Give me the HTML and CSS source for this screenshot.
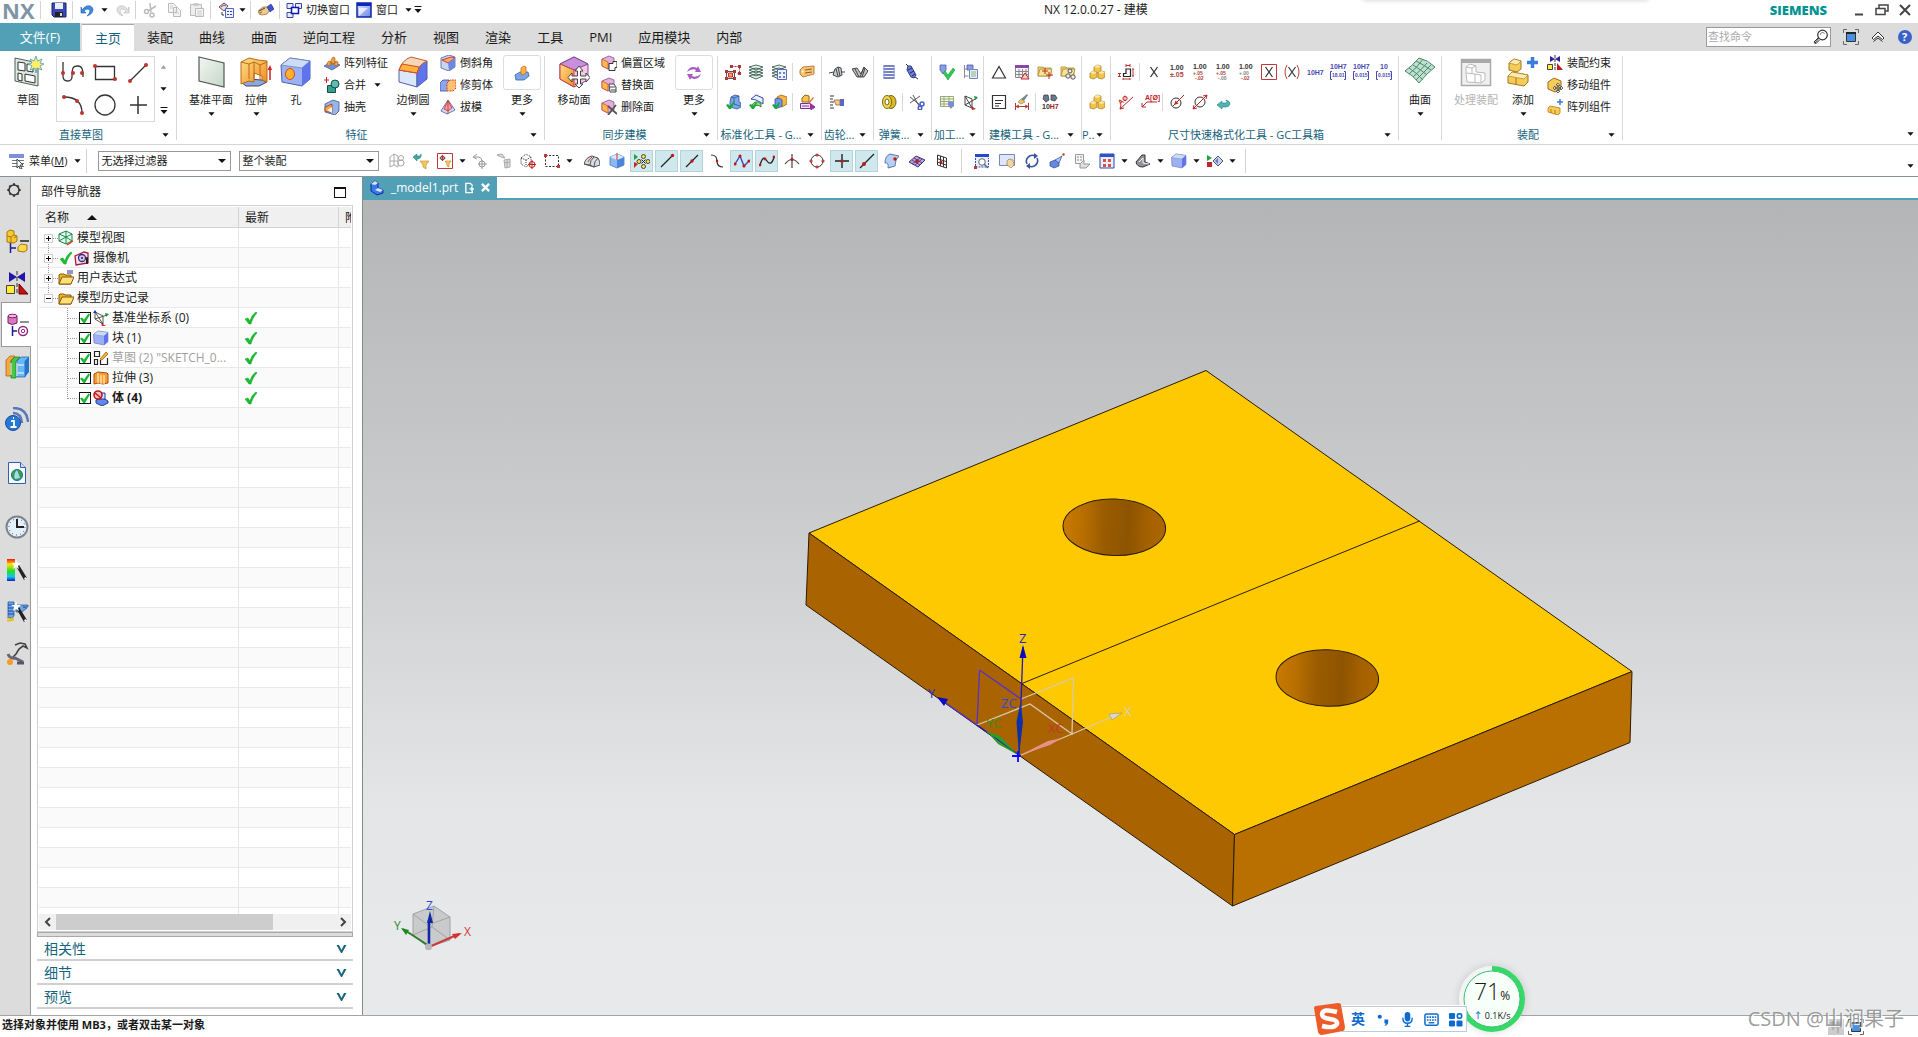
FILE: index.html
```html
<!DOCTYPE html>
<html lang="zh-CN">
<head>
    <meta charset="UTF-8">
    <meta name="viewport" content="width=device-width, initial-scale=1.0">
    <title>NX 12.0.0.27 - 建模</title>
    <link rel="stylesheet" href="styles.css">
</head>
<body>
    <!-- 图标 -->
    <svg class="sprite" aria-hidden="true">
        <defs>
            <linearGradient id="g-blue" x1="0" y1="0" x2="1" y2="1"><stop offset="0" stop-color="#dfe6ff"/><stop offset="1" stop-color="#6a86e8"/></linearGradient>
            <linearGradient id="g-orange" x1="0" y1="0" x2="1" y2="1"><stop offset="0" stop-color="#ffe08a"/><stop offset="1" stop-color="#f08a20"/></linearGradient>
            <linearGradient id="g-green" x1="0" y1="0" x2="1" y2="1"><stop offset="0" stop-color="#f4f6f3"/><stop offset="1" stop-color="#c3d8c6"/></linearGradient>
            <linearGradient id="g-rainbow" x1="0" y1="0" x2="0" y2="1"><stop offset="0" stop-color="#e81e10"/><stop offset=".25" stop-color="#ffe000"/><stop offset=".55" stop-color="#20e020"/><stop offset=".8" stop-color="#10c8e8"/><stop offset="1" stop-color="#1020c8"/></linearGradient>
            <linearGradient id="g-hole" x1="0" y1="0" x2="1" y2="0"><stop offset="0" stop-color="#c97a00"/><stop offset=".2" stop-color="#b86e00"/><stop offset=".4" stop-color="#9a5c00"/><stop offset=".64" stop-color="#8e5400"/><stop offset=".85" stop-color="#a66200"/><stop offset="1" stop-color="#ac6600"/></linearGradient>
        </defs>
        <symbol id="caret" viewBox="0 0 8 4"><path d="M0.500 0h7L4 4z" fill="#111"/></symbol>
        <symbol id="caret-up" viewBox="0 0 8 4"><path d="M1 4h6L4 0z" fill="#999"/></symbol>
        <symbol id="caret-bar" viewBox="0 0 8 8"><path d="M0.500 0h7v1h-7zM0.500 3h7L4 7z" fill="#111"/></symbol>
        <symbol id="check" viewBox="0 0 16 16"><path d="M2 9l3-1 2 3c1-4 3-7 6-9l1 1c-3 3-5 7-6 11H6z" fill="#16c02e" stroke="#0f9a22" stroke-width=".5"/></symbol>

        <symbol id="save" viewBox="0 0 16 16"><path d="M1 1h14v14H3l-2-2z" fill="#3b46b8" stroke="#1c2266"/><path d="M4 1h8v6H4z" fill="#e8f0f4"/><path d="M4 10h8v5H4z" fill="#222"/><path d="M9 11h2v3H9z" fill="#ddd"/></symbol>
        <symbol id="undo" viewBox="0 0 16 16"><path d="M2 8c4-6 10-5 11-1 0 4-3 6-6 7 3-3 4-6 1-7-2 0-3 1-4 2l2 2H1V5z" fill="#3b8be0" stroke="#2058b0" stroke-width=".6"/></symbol>
        <symbol id="redo" viewBox="0 0 16 16"><path d="M14 8C10 2 4 3 3 7c0 4 3 6 6 7-3-3-4-6-1-7 2 0 3 1 4 2l-2 2h5V5z" fill="#e2e2e2" stroke="#bcbcbc" stroke-width=".7"/></symbol>
        <symbol id="cut" viewBox="0 0 16 16"><path d="M7 1l1 9M13 4L5 9" fill="none" stroke="#bbb" stroke-width="1.500"/><circle cx="3.500" cy="9.500" r="2" fill="none" stroke="#bbb" stroke-width="1.500"/><circle cx="9" cy="13" r="2" fill="none" stroke="#bbb" stroke-width="1.500"/></symbol>
        <symbol id="copy" viewBox="0 0 16 16"><path d="M2.500 1.500h5l3 3v6h-8zM7.500 5.500h4l3 3v6h-7z" fill="#f4f4f4" stroke="#bbb"/><path d="M4 4h3M4 6h3M9 9h3M9 11h4" stroke="#ccc"/></symbol>
        <symbol id="paste" viewBox="0 0 16 16"><path d="M1.500 2.500h11v11h-11z" fill="#eee" stroke="#bbb"/><path d="M4.500 1h5v3h-5z" fill="#ccc"/><path d="M6.500 6.500h8v8h-8z" fill="#f6f6f6" stroke="#bbb"/><path d="M8 9h5M8 11h5M8 13h5" stroke="#ccc"/></symbol>
        <symbol id="command" viewBox="0 0 16 16"><path d="M1 5l5-4 4 3-4 5z" fill="#dfe4ea" stroke="#556"/><path d="M3 5l3-2 2 1" stroke="#c33" fill="none"/><path d="M7.500 6.500h8v9h-8z" fill="#eef2ff" stroke="#5566c0"/><path d="M9 9h2v1H9zM12 9h2v1h-2zM9 12h2v1H9zM12 12h2v1h-2z" fill="#3344b0"/><path d="M4 10v3h2" stroke="#333" fill="none"/></symbol>
        <symbol id="hand" viewBox="0 0 16 16"><path d="M0 9l5-4 4 0 3 3-3 4-5 1-3-1 3-2-4 1z" fill="#f2c98c" stroke="#7a5520" stroke-width=".6"/><path d="M9 5l4-3 3 5-4 3z" fill="#4054d0" stroke="#202878" stroke-width=".6"/><path d="M1 9l6-3" stroke="#444"/></symbol>
        <symbol id="switch" viewBox="0 0 16 16"><path d="M1 1.500h6v5H1zM9.500 1.500h6v5h-6zM1 10.500h6v5H1z" fill="#e6ebff" stroke="#3344a0"/><path d="M5.500 5.500h7v6h-7z" fill="#fff" stroke="#0a1ab0" stroke-width="1.500"/></symbol>
        <symbol id="window" viewBox="0 0 16 16"><path d="M1 1h14v14H1z" fill="url(#g-blue)" stroke="#1026a0" stroke-width="1.500"/><path d="M1 1h14v3H1z" fill="#1026c0"/><path d="M3 14V6h9z" fill="#fff" opacity=".7"/></symbol>

        <symbol id="sketch" viewBox="0 0 32 32"><path d="M3 2l23 5v23L3 25z" fill="#dce9e0" stroke="#50605a"/><path d="M6 6l7 1v8l-7-1zM6 17l4 1v7l-4-1zM13 18l10 2v7l-10-2zM15 8l6 1v7l-6-1z" fill="#fafcfa" stroke="#333"/><path d="M24 0l1.500 5L30 3l-2 4 4 1-4 2 2 4-5-2-1 5-1-5-5 2 2-4-4-2 4-1-2-4 4 2z" fill="#fff06a" stroke="#4a9ac0" stroke-width=".8"/></symbol>
        <symbol id="s-profile" viewBox="0 0 24 24"><path d="M2 1v14c0 7 9 6 9 1 0-10 1-11 6-11 4 0 5 3 5 11" fill="none" stroke="#333" stroke-width="1.300"/><path d="M2 12h0M12 12h0M21 12h0" stroke="#c0342c" stroke-width="4" stroke-linecap="round"/></symbol>
        <symbol id="s-rect" viewBox="0 0 24 24"><path d="M2.500 5.500h19v13h-19z" fill="none" stroke="#333" stroke-width="1.300"/><path d="M2 5h0M22 18h0" stroke="#c0342c" stroke-width="4" stroke-linecap="round"/></symbol>
        <symbol id="s-line" viewBox="0 0 24 24"><path d="M4 20L20 4" stroke="#333" stroke-width="1.300"/><path d="M4 20h0M20 4h0" stroke="#c0342c" stroke-width="4" stroke-linecap="round"/></symbol>
        <symbol id="s-arc" viewBox="0 0 24 24"><path d="M3 4q18 0 18 16" fill="none" stroke="#333" stroke-width="1.300"/><path d="M3 4h0M16 8h0M21 20h0" stroke="#c0342c" stroke-width="4" stroke-linecap="round"/></symbol>
        <symbol id="s-circle" viewBox="0 0 24 24"><circle cx="12" cy="12" r="10" fill="none" stroke="#333" stroke-width="1.300"/></symbol>
        <symbol id="s-plus" viewBox="0 0 24 24"><path d="M12 3v18M4 12h17" stroke="#333" stroke-width="1.500"/></symbol>

        <symbol id="plane" viewBox="0 0 32 32"><path d="M4 1l25 6v24L4 25z" fill="url(#g-green)" stroke="#555" stroke-width="1.200"/></symbol>
        <symbol id="extrude" viewBox="0 0 32 32"><path d="M1 26l8-3 13 1 5 2-8 4H6z" fill="#8aa8d8" stroke="#446"/><path d="M1 6l8-4 9 2 9 1v21l-5-2v-4l-8-3v9l-5-1-8 3z" fill="url(#g-orange)" stroke="#b86a10"/><path d="M1 6l8 2 5-2 6 3 7-3M9 8v15M14 6v17M20 9v15" fill="none" stroke="#b86a10"/><path d="M30 24V12" stroke="#d02020" stroke-width="1.500"/><path d="M27.500 14L30 9l2 5z" fill="#d02020"/></symbol>
        <symbol id="block" viewBox="0 0 32 32"><path d="M1 9l9-7 20 3v18l-8 7-20-4z" fill="#9db0f4" stroke="#5060a8"/><path d="M1 9l9-7 20 3-8 7z" fill="#ccdcf4" stroke="#6a7ab8" stroke-width=".7"/><path d="M22 12l8-7v18l-8 7z" fill="#5f74ea"/></symbol>
        <symbol id="hole" viewBox="0 0 32 32"><use href="#block"/><ellipse cx="10" cy="18" rx="4.500" ry="5.500" fill="#ffb030" stroke="#d05010"/></symbol>
        <symbol id="blend" viewBox="0 0 32 32"><path d="M2 14l18 3v14L2 26z" fill="#dbe7fa" stroke="#5060a8"/><path d="M20 17q1-8 10-12v18l-10 8z" fill="#5f74ea" stroke="#5060a8"/><path d="M14 1l16 4q-9 4-10 12L2 14Q5 4 14 1z" fill="#f4d8b8" stroke="#c06030"/><path d="M5 8l17 3-2 6-18-3z" fill="#ffb23e" stroke="#d84a20"/></symbol>
        <symbol id="pattern" viewBox="0 0 16 16"><path d="M0 11l8-4 8 3-8 5z" fill="#6f92d8" stroke="#34559c" stroke-width=".7"/><path d="M3 8l2-2 2 1v3l-2 1-2-1zM7 5l2-3 2 1v5l-2 1-2-1zM10 9l2-3 2 1v3l-2 1-2-1z" fill="#f2a040" stroke="#9a5010" stroke-width=".6"/></symbol>
        <symbol id="unite" viewBox="0 0 16 16"><path d="M3.500 8.500h8v7h-8z" fill="#35a08e" stroke="#134f48"/><circle cx="11" cy="7" r="4" fill="#5cbcae" stroke="#134f48"/><path d="M2.500 0v6M0 3h5" stroke="#d02020"/></symbol>
        <symbol id="shell" viewBox="0 0 16 16"><path d="M1 5l8-4 6 2v9l-4 4-10-3z" fill="#98b4e8" stroke="#3c569c" stroke-width=".8"/><path d="M1 8l7-3v9l-7-2z" fill="#f0a050" stroke="#8a4a18" stroke-width=".8"/><path d="M3 11l5-3v6z" fill="#fff0e0"/></symbol>
        <symbol id="chamfer" viewBox="0 0 16 16"><path d="M1 3l8-3 6 2v10l-6 4-8-3z" fill="#c8d6f0" stroke="#4a5ea4" stroke-width=".8"/><path d="M2 5l9-3 4 1-7 5z" fill="#f8a870" stroke="#c83020" stroke-width=".9"/><path d="M8 8l7-5v9l-6 4z" fill="#7088dc"/></symbol>
        <symbol id="trim" viewBox="0 0 16 16"><path d="M0 6l3-3h6v9l-2 2H0z" fill="#8ea6f0" stroke="#3a4c9c" stroke-width=".8"/><path d="M7 6l3-3h6v8l-3 3H7z" fill="#ffc070" stroke="#d04020" stroke-dasharray="2 1"/></symbol>
        <symbol id="draft" viewBox="0 0 16 16"><path d="M8 1L1 12l6 3 8-4z" fill="#d4daf4" stroke="#4c5ca4" stroke-width=".8"/><path d="M8 2L4 10l4 2 4-3z" fill="#f0a0a0" stroke="#d02828" stroke-width=".8"/><path d="M8 1v14" stroke="#c03030" stroke-width=".8"/></symbol>
        <symbol id="more-blue" viewBox="0 0 16 16"><path d="M1 10l5-3h8l1 4-5 4H2z" fill="#7ba5e4" stroke="#3564a8" stroke-width=".8"/><path d="M7 3l3-2 2 1v6l-3 2-2-1z" fill="#ffb54c" stroke="#c66c10" stroke-width=".8"/></symbol>
        <symbol id="move-face" viewBox="0 0 32 32"><path d="M2 8L16 1l14 7v16l-14 7-14-8z" fill="#f4c8e4" stroke="#85468e"/><path d="M2 8L16 1l14 7-14 6z" fill="#c890dc" stroke="#85468e"/><path d="M2 8l14 6v17L2 23z" fill="url(#g-orange)" stroke="#c84040"/><path d="M21 10l4 5h-2.500v5H28v-3l4 4.500-4 4.500v-3h-5.500v5H25l-4 4-4-4h2.500v-5H14v3l-4-4.500 4-4.500v3h5.500v-5H17z" fill="#fff" stroke="#444"/></symbol>
        <symbol id="face" viewBox="0 0 16 16"><path d="M1 4l7-3 5 2v8l-6 3-6-3z" fill="#e0b0dc" stroke="#8a4a90" stroke-width=".8"/><path d="M1 4l6 3v7l-6-3z" fill="#ffb84c" stroke="#d05040" stroke-width=".8"/></symbol>
        <symbol id="face-offset" viewBox="0 0 16 16"><use href="#face"/><path d="M8 8.500h4v-2h4v6h-2v3H8z" fill="#fff" stroke="#333"/></symbol>
        <symbol id="face-replace" viewBox="0 0 16 16"><use href="#face"/><path d="M8 7h5l2 3v5H9z" fill="#fff" stroke="#444"/><path d="M9 10h5M10 13h5" stroke="#444"/></symbol>
        <symbol id="face-delete" viewBox="0 0 16 16"><use href="#face"/><path d="M7 7l9 8M15 6l-8 10" stroke="#555" stroke-width="1.800"/></symbol>
        <symbol id="more-cycle" viewBox="0 0 16 16"><path d="M1 7q3-7 10-4l1-2 3 6-6 0 1-2q-4-2-9 2zM15 9q-3 7-10 4l-1 2-3-6 6 0-1 2q4 2 9-2z" fill="#a65cc0"/></symbol>

        <symbol id="g-attr" viewBox="0 0 16 16"><path d="M6.500 2.500h8v7h-3" fill="none" stroke="#b83030" stroke-dasharray="2 1"/><path d="M1.500 7.500h8v7h-8z" fill="#fff" stroke="#555"/><path d="M3.500 9h4v4h-4z" fill="#f8a060" stroke="#c03030"/><path d="M0 6h3v3H0zM8 6h3v3H8zM0 13h3v3H0zM8 13h3v3H8zM5 1h3v3H5zM13 1h3v3h-3zM13 8h3v3h-3z" fill="#a83c3c"/></symbol>
        <symbol id="g-layers" viewBox="0 0 16 16"><path d="M1 12l7-2 7 2-7 3zM1 9l7-2 7 2-7 3zM1 6l7-2 7 2-7 3zM1 3l7-2 7 2-7 3z" fill="#e4f2ea" stroke="#3c5c50" stroke-width=".9"/></symbol>
        <symbol id="g-layers2" viewBox="0 0 16 16"><use href="#g-layers"/><path d="M6.500 5.500h9v10h-9z" fill="#eef1ff" stroke="#5868b8"/><path d="M8 8h2v2H8zM12 8h2v2h-2zM8 12h2v2H8zM12 12h2v2h-2z" fill="#7080c8"/></symbol>
        <symbol id="g-tag" viewBox="0 0 16 16"><path d="M1 6l3-3 11-1v8l-11 3-3-3z" fill="#f9c574" stroke="#a86a18" stroke-width=".8"/><path d="M6 6l7-1M6 9l7-1" stroke="#8a5c2c"/><circle cx="3.500" cy="7.500" r="1" fill="#fff"/></symbol>
        <symbol id="g-part" viewBox="0 0 16 16"><path d="M6 3l4-2 4 1v6l2 1v4l-4 2-7-2V8z" fill="#7ca6ec" stroke="#2e549c" stroke-width=".8"/><path d="M6 3l3 1 5-2M9 4v6l6 2" fill="none" stroke="#2e549c" stroke-width=".8"/><path d="M1 11l2-1 2 2 4-5 1 1-4 7H4z" fill="#18a83c"/></symbol>
        <symbol id="g-part2" viewBox="0 0 16 16"><path d="M3 5l5-4 7 3v6L12 8l-4-2z" fill="#e8f0ff" stroke="#3048b0"/><path d="M4 11q4-6 9-1v3Q9 9 5 14z" fill="#8ae070" stroke="#187030" stroke-width=".8"/><path d="M1 11l2-1 2 2 3-4 1 1-3 6H4z" fill="#18a83c"/></symbol>
        <symbol id="g-part3" viewBox="0 0 16 16"><path d="M6 3l4-2 6 2v7l-5 3-5-2z" fill="#f7b440" stroke="#9c6410" stroke-width=".8"/><path d="M4 5l4-1 3 2v6l-4 2-3-2z" fill="#7098e8" stroke="#2c4c9c" stroke-width=".8"/><path d="M1 11l2-1 2 2 3-4 1 1-3 6H4z" fill="#18a83c"/></symbol>
        <symbol id="g-rename" viewBox="0 0 16 16"><path d="M1.500 9.500h10v5h-10z" fill="#f0e0ff" stroke="#6a3490"/><path d="M3 8V4l3-3 4 1v6z" fill="#f7c350" stroke="#9c6410"/><path d="M9 9l5-6 1 1-5 6z" fill="#e07030"/><path d="M3 12h7M12 10l4 3-4 3z" stroke="#a030a0" fill="#a030a0"/></symbol>
        <symbol id="gear-cyl" viewBox="0 0 16 16"><path d="M4 11l2-6 3-2 3 1 1 7-4 2z" fill="#c8ccd0" stroke="#333" stroke-width=".9"/><path d="M0 9l5-1M12 8h4M7 5l2 7M9 3l2 9" stroke="#444"/></symbol>
        <symbol id="gear-cone" viewBox="0 0 16 16"><path d="M0 5l5-1 4 6 3-7 4 4-4 6H5z" fill="#bcc0c4" stroke="#333" stroke-width=".9"/><path d="M8 13L12 3M3 5l4 8M13 4l-3 9" stroke="#444"/></symbol>
        <symbol id="gear-show" viewBox="0 0 16 16"><path d="M1 2h4M1 5h3M1 8h4M1 11h3M1 14h4" stroke="#333"/><path d="M5 6h6v5H7z" fill="#f2c98c" stroke="#8a6030" stroke-width=".7"/><path d="M11 5h4v7h-4z" fill="#5868c0"/></symbol>
        <symbol id="spring" viewBox="0 0 16 16"><path d="M3 2h10M3 5h10M3 8h10M3 11h10M3 14h10" stroke="#4a58b0" stroke-width="1.500" stroke-linecap="round"/><path d="M3 2v12M13 2v12" stroke="#8a96d8"/></symbol>
        <symbol id="spring2" viewBox="0 0 16 16"><path d="M4 2l3 0 5 9-2 3-3-1L3 6z" fill="#7080d8" stroke="#2c388c"/><path d="M4 6l4-2M6 9l4-2M8 12l3-2M11 13l3 2M4 2L2 0" stroke="#1c2870"/></symbol>
        <symbol id="reel" viewBox="0 0 16 16"><ellipse cx="10" cy="8" rx="5" ry="6.500" fill="#d8b828" stroke="#7a6408"/><ellipse cx="6" cy="8" rx="4.500" ry="6.500" fill="#f0d858" stroke="#7a6408"/><ellipse cx="6" cy="8" rx="2" ry="3" fill="#fff" stroke="#7a6408"/></symbol>
        <symbol id="scissors" viewBox="0 0 16 16"><path d="M1 3l10 8M4 1l6 11M1 9l10-7" stroke="#555" fill="none"/><circle cx="13" cy="10" r="2" fill="none" stroke="#4860c8" stroke-width="1.500"/><circle cx="11" cy="14" r="1.800" fill="none" stroke="#4860c8" stroke-width="1.500"/></symbol>
        <symbol id="m-check" viewBox="0 0 16 16"><path d="M1 1h6v5l-3 4-3-4z" fill="#8c9ce4" stroke="#4c5cac" stroke-width=".8"/><path d="M4 9l2-2 3 4 5-7 2 2-7 10z" fill="#30c850" stroke="#189038" stroke-width=".5"/></symbol>
        <symbol id="m-copy" viewBox="0 0 16 16"><path d="M2.500 1v13M2.500 5h4M2.500 12h4" stroke="#889" fill="none"/><path d="M5 1h6v5H5z" fill="#8c9ce4" stroke="#4c5cac" stroke-width=".8"/><path d="M7.500 5.500h8v9h-8z" fill="#e4ecf8" stroke="#7088b0"/><path d="M9 8h5M9 10h5M9 12h5" stroke="#8cb888"/></symbol>
        <symbol id="m-grid" viewBox="0 0 16 16"><path d="M1.500 2.500h13v10h-13zM1 5h14M1 7.500h14M1 10h14M5 2v11M10 2v11" fill="#f4f8e8" stroke="#98a878"/><path d="M9 8h6v3l-3 4-3-4z" fill="#7c8cdc"/></symbol>
        <symbol id="m-axis" viewBox="0 0 16 16"><path d="M3 2v9l7 3V5zM3 11l12-7M3 2l7 12" fill="none" stroke="#444"/><path d="M12 2l4 1-3 3z" fill="#18a030"/><path d="M9 12l5 3-4 1z" fill="#c02828"/></symbol>
        <symbol id="b-tri" viewBox="0 0 16 16"><path d="M8 2.500L1.500 14h13z" fill="#fff" stroke="#333" stroke-width="1.200"/></symbol>
        <symbol id="b-table" viewBox="0 0 16 16"><path d="M1.500 1.500h13v12h-13zM1 7.500h14M1 10.500h14M5 5v9M8.500 5v9M12 5v9" fill="#f6f2fa" stroke="#888"/><path d="M1 1h14v3H1z" fill="#8848a8"/><path d="M11 9l4 6H7z" fill="#fcd0c8" stroke="#c02828"/></symbol>
        <symbol id="b-folder" viewBox="0 0 16 16"><path d="M1 3h5l1 1h7v8H1z" fill="#f5d56a" stroke="#a8883c" stroke-width=".8"/><path d="M1 12l2-7h12l-2 7z" fill="#fbe48e" stroke="#a8883c" stroke-width=".8"/></symbol>
        <symbol id="b-folder-plus" viewBox="0 0 16 16"><use href="#b-folder"/><path d="M8 4v6M5 7h6M12 8v7M9 11h7" stroke="#c02828"/></symbol>
        <symbol id="b-folder-find" viewBox="0 0 16 16"><use href="#b-folder"/><g fill="#eee" stroke="#555"><circle cx="10" cy="7" r="2"/><circle cx="8" cy="12" r="2.200"/><circle cx="13" cy="13" r="2.200"/></g></symbol>
        <symbol id="b-note" viewBox="0 0 16 16"><path d="M1.500 1.500h13v13h-13z" fill="#fff" stroke="#333" stroke-width="1.200"/><path d="M4 6.500h8M4 9.500h6M4 12h4" stroke="#333"/></symbol>
        <symbol id="b-brush" viewBox="0 0 16 16"><path d="M7 5l6-5 1 1-4 6z" fill="#7888a0"/><path d="M4 8l3-3 4 3-4 2z" fill="#e8c860" stroke="#98782c" stroke-width=".6"/><path d="M1.500 9v7M14.500 9v7M2 12.500h12M5 11l-3 1.500L5 14M11 11l3 1.500-3 1.500" fill="none" stroke="#b83838"/></symbol>
        <symbol id="boxes" viewBox="0 0 16 16"><path d="M5 3l3-2 4 1v5l-3 2-4-1zM1 9l3-2 4 1v5l-3 2-4-1zM9 9l3-2 4 1v5l-3 2-4-1z" fill="#f2c448" stroke="#a0781c" stroke-width=".7"/><path d="M5 3l3-2 4 1-3 2zM1 9l3-2 4 1-3 2zM9 9l3-2 4 1-3 2z" fill="#ffe9a4"/></symbol>

        <symbol id="d-sec" viewBox="0 0 16 16"><path d="M5.500 12.500V9.500H8V5h4.500v7.500z" fill="#fff" stroke="#222" stroke-width="1.200"/><path d="M8 1.500h4M8 0v3M12 0v3M14 5h2M14 12h2M15 5v7M0 9.500h3M0 12.500h3M1.500 9.500v3M5 15h7M5 14v2M12 14v2" stroke="#c03030"/></symbol>
        <symbol id="d-x" viewBox="0 0 16 16"><path d="M4.500 3l7 10M11.500 3l-7 10" stroke="#333" stroke-width="1.300"/></symbol>
        <symbol id="d-xbox" viewBox="0 0 16 16"><path d="M.5.500h15v15H.5z" fill="#fff" stroke="#c03838"/><path d="M4.500 3l7 10M11.500 3l-7 10" stroke="#333" stroke-width="1.200"/></symbol>
        <symbol id="d-xpar" viewBox="0 0 16 16"><path d="M3 1Q-1 8 3 15M13 1q4 7 0 14" fill="none" stroke="#c03838"/><path d="M4.500 3l7 10M11.500 3l-7 10" stroke="#333" stroke-width="1.200"/></symbol>
        <symbol id="d-dia1" viewBox="0 0 16 16"><circle cx="7" cy="9" r="5" fill="none" stroke="#333"/><path d="M4 12L15 1" stroke="#c02828"/><path d="M5 11l1.500-4.500L9.500 9.500z" fill="#c02828"/></symbol>
        <symbol id="d-dia2" viewBox="0 0 16 16"><circle cx="8" cy="8" r="5" fill="none" stroke="#333"/><path d="M1 15L15 1M15 1l-1 4M15 1l-4 1M1 15l1-4M1 15l4-1" stroke="#c02828" fill="none"/></symbol>
        <symbol id="back" viewBox="0 0 16 16"><path d="M2 11l5-4v2h4q2-1 0-3 4 1 4 4-1 3-4 3H7v2z" fill="#4cb4b4" stroke="#2c8080" stroke-width=".6"/></symbol>
        <symbol id="surface" viewBox="0 0 32 32"><path d="M1 15Q8 10 15 2q9 2 16 9-8 6-16 16Q9 19 1 15z" fill="#bfe0ce" stroke="#4a8a6c"/><path d="M5 12q8 5 14 12M9 9q8 5 14 10M12 5q8 4 15 9M5 18q8-6 14-15M9 21q8-7 14-14M12 24q8-8 15-15" fill="none" stroke="#4a8a6c"/></symbol>
        <symbol id="asm-process" viewBox="0 0 32 32"><path d="M1.500 3.500h29v26h-29z" fill="#f0f0f0" stroke="#aaa" stroke-width="1.500"/><path d="M1 3h30v4H1z" fill="#aaa"/><path d="M6 17V11l4-3 6 2v6l9 1v7l-4 3-14-1z" fill="#fff" stroke="#bbb"/><path d="M6 17l9 1v8M15 18l6 1v8M6 11l6 1 4-2M12 12v5" fill="none" stroke="#bbb"/></symbol>
        <symbol id="asm-add" viewBox="0 0 32 32"><path d="M2 7l5-4 7 2v8l-4 3-8-2zM1 20l4-4 16 3v7l-4 4-16-3z" fill="#f6cc58" stroke="#a0781c"/><path d="M2 7l5-4 7 2-4 4zM1 20l4-4 16 3-4 4z" fill="#ffeab0" stroke="#a0781c" stroke-width=".6"/><path d="M9 22v7" stroke="#a0781c"/><path d="M25.500 1v11M20 6.500h11" stroke="#3c7cdc" stroke-width="3.500"/></symbol>
        <symbol id="constrain" viewBox="0 0 16 16"><path d="M3 1l5 3-5 3zM13 1L8 4l5 3z" fill="#3020a0"/><path d="M.5 9.500h5v5h-5z" fill="#ffee40" stroke="#444"/><path d="M10 8v7h6z" fill="#c01818"/><path d="M8 0v16" stroke="#333" stroke-dasharray="3 1"/></symbol>
        <symbol id="asm-move" viewBox="0 0 16 16"><path d="M1 5l6-4 7 3v8l-6 3-7-3z" fill="#f6cc58" stroke="#a0681c"/><path d="M11 6l2 2.500h-1.500V10.500H14V9l2 2-2 2v-1.500h-2.500V14H13l-2 2-2-2h1.500v-2.500H8V13l-2-2 2-2v1.500h2.500V8H9z" fill="#fff" stroke="#333" stroke-width=".7"/></symbol>
        <symbol id="asm-pattern" viewBox="0 0 16 16"><path d="M1 9l2-2 10 2v5l-2 2-10-3z" fill="#f6cc58" stroke="#c07818" stroke-width=".8"/><path d="M4 10v4M8 11v4" stroke="#c07818"/><path d="M13 0v6M10 3h6" stroke="#3c7cdc" stroke-width="1.500"/></symbol>
        <symbol id="search" viewBox="0 0 16 16"><circle cx="9.500" cy="6" r="4.800" fill="#fff" stroke="#333" stroke-width="1.200"/><path d="M7.500 6a2 2 0 0 1 4-1" fill="none" stroke="#888"/><path d="M6 9l-4 5M5 9l-4 4 1.500 2L7 10.500" fill="#fff" stroke="#333"/></symbol>
        <symbol id="fullscreen" viewBox="0 0 16 16"><path d="M.5 4V.5H4M12 .5h3.500V4M15.500 12v3.500H12M4 15.500H.5V12" fill="none" stroke="#666"/><path d="M3.500 3.500h9v9h-9z" fill="#4a90e0" stroke="#333"/><path d="M3 3h10v2H3z" fill="#222"/></symbol>
        <symbol id="collapse" viewBox="0 0 16 16"><path d="M2 9l6-6 6 6-1.500 1.500L8 7l-4.500 3.500z" fill="#fff" stroke="#333"/><path d="M3.500 12.500L8 9l4.500 3.500" fill="none" stroke="#333"/></symbol>

        <symbol id="menu" viewBox="0 0 16 16"><path d="M0 1h15v4H0z" fill="#8090d8"/><path d="M3 7.500h12M3 10.500h12M3 13.500h12" stroke="#777"/><path d="M8 6l6 6h-3l2 4-2 0-1-3-2 2z" fill="#fff" stroke="#222" stroke-width=".8"/></symbol>
        <symbol id="f-find" viewBox="0 0 16 16"><path d="M1 4l4-3v11l-4 2zM5 1l4 2v11l-4-2M1 8l8 0" fill="none" stroke="#aaa"/><circle cx="12" cy="5" r="2.500" fill="none" stroke="#aaa"/><circle cx="12" cy="10" r="3" fill="none" stroke="#aaa"/></symbol>
        <symbol id="f-reset" viewBox="0 0 16 16"><path d="M0 4l4-3v2h2q2 0 2-2 1 4-3 5H4v2z" fill="#3ca8a0" stroke="#207870" stroke-width=".5"/><path d="M7 8h9l-3 4v4l-3-2v-2z" fill="#f8c858" stroke="#b8842c" stroke-width=".6"/></symbol>
        <symbol id="f-box" viewBox="0 0 16 16"><path d="M.5.500h15v15H.5z" fill="#fff" stroke="#c03838"/><circle cx="5.500" cy="5" r="2" fill="none" stroke="#444"/><path d="M5.500 2v6M2.500 5h6" stroke="#c03030"/><path d="M8 8h6l-2 3v3l-2-1v-2z" fill="#f8c858" stroke="#b8842c" stroke-width=".6"/></symbol>
        <symbol id="f-up" viewBox="0 0 16 16"><path d="M1 4l4-3M1 4l4 2M1 4h6q3 1 3 4" fill="none" stroke="#999"/><circle cx="10" cy="11" r="3" fill="#fff" stroke="#999"/><path d="M10 7v9M6 11h9" stroke="#999"/></symbol>
        <symbol id="f-up2" viewBox="0 0 16 16"><path d="M1 2l5-1 3 4-4-1zM8 7l6-1v8l-5 1zM8 10l6-1M11 6v9" fill="#ddd" stroke="#aaa"/></symbol>
        <symbol id="f-sel" viewBox="0 0 16 16"><path d="M1 5l5-4 5 3v6l-5 4-5-3zM1 5l5 2 5-3M6 7v6" fill="none" stroke="#333" stroke-dasharray="1 1"/><circle cx="12" cy="11.500" r="3" fill="none" stroke="#c02020"/><path d="M12 7v9M8 11.500h8" stroke="#c02020"/></symbol>
        <symbol id="f-rect" viewBox="0 0 16 16"><path d="M1.500 2.500h13v11h-13z" fill="none" stroke="#333" stroke-dasharray="2 1.500"/><path d="M0 1h3v3H0zM13 12h3v3h-3z" fill="#c03838"/></symbol>
        <symbol id="v-clip" viewBox="0 0 16 16"><path d="M0 11Q2 4 8 3l6 2q2 3 2 7l-6 2z" fill="#d8dce4" stroke="#555"/><path d="M0 11l6 1 4 2q0-6 4-9M6 12q0-5 4-8" fill="none" stroke="#555"/><path d="M4 9q1-3 4-5" fill="none" stroke="#c04040"/></symbol>
        <symbol id="v-box" viewBox="0 0 16 16"><path d="M1 4l7-3 7 3v8l-7 3-7-3z" fill="#8cb8f4" stroke="#5078b8" stroke-width=".8"/><path d="M8 7l7-3v8l-7 3z" fill="#4c84dc"/><path d="M1 4l7-3 7 3-7 3z" fill="#d8e8fa"/><path d="M8 0v7" stroke="#d03030"/></symbol>
        <symbol id="n-point" viewBox="0 0 16 16"><path d="M0 1l4 3-4 3z" fill="#20a040"/><path d="M0 9l4 2-4 4z" fill="#c02828"/><g fill="#ffe24a" stroke="#333" stroke-width=".9"><circle cx="9.500" cy="3.500" r="2"/><circle cx="9.500" cy="13.500" r="2"/><circle cx="5" cy="8.500" r="2"/><circle cx="14" cy="8.500" r="2"/></g><path d="M7.500 6.500l4 4M11.500 6.500l-4 4" stroke="#222"/></symbol>
        <symbol id="n-end" viewBox="0 0 16 16"><path d="M2 14L13 3" stroke="#222" stroke-width="1.200"/><circle cx="13.500" cy="2.500" r="1.700" fill="#c01818"/></symbol>
        <symbol id="n-mid" viewBox="0 0 16 16"><path d="M2 14L14 2" stroke="#222" stroke-width="1.200"/><circle cx="8" cy="8" r="1.700" fill="#c01818"/></symbol>
        <symbol id="n-ctrl" viewBox="0 0 16 16"><path d="M2 2q6 0 6 6t6 6" fill="none" stroke="#333" stroke-width="1.200"/><path d="M8 8v0" stroke="#c01818" stroke-width="2.500" stroke-linecap="round"/></symbol>
        <symbol id="n-poly" viewBox="0 0 16 16"><path d="M1 11l5-8 4 10 5-5" fill="none" stroke="#4040c0" stroke-width="1.400"/><path d="M1 11h0M6 3h0M10 13h0M15 8h0" stroke="#c01818" stroke-width="3.200" stroke-linecap="round"/></symbol>
        <symbol id="n-spline" viewBox="0 0 16 16"><path d="M1 12C4 2 6 5 8 8s5 4 7-4" fill="none" stroke="#222" stroke-width="1.300"/><path d="M1 12h0M6 6h0M15 4h0" stroke="#c01818" stroke-width="2.800" stroke-linecap="round"/></symbol>
        <symbol id="n-int" viewBox="0 0 16 16"><path d="M8 1v14M1 11q7-9 14 0" fill="none" stroke="#444" stroke-width="1.200"/><circle cx="8" cy="6.500" r="1.500" fill="#c01818"/></symbol>
        <symbol id="n-quad" viewBox="0 0 16 16"><circle cx="8" cy="8" r="6" fill="none" stroke="#333"/><path d="M8 2h0M14 8h0M8 14h0M2 8h0" stroke="#c04040" stroke-width="3.200" stroke-linecap="round"/></symbol>
        <symbol id="n-exist" viewBox="0 0 16 16"><path d="M8 1v14M1 8h14" stroke="#222" stroke-width="1.400"/><path d="M6.500 8h3" stroke="#c01818" stroke-width="2.500"/></symbol>
        <symbol id="n-curve" viewBox="0 0 16 16"><path d="M1 15L15 1" stroke="#222" stroke-width="1.200"/><circle cx="5" cy="11" r="2" fill="#c01818"/></symbol>
        <symbol id="n-face" viewBox="0 0 16 16"><path d="M1 10Q1 3 6 1l9 2q-4 3-4 10L4 15q1-6-3-5z" fill="#b8d0f0" stroke="#5878b0"/><circle cx="11" cy="6" r="1.700" fill="#c01818"/></symbol>
        <symbol id="n-mesh" viewBox="0 0 16 16"><path d="M0 9l7-6 9 4-7 7z" fill="#b8a4e0" stroke="#403070"/><path d="M3 7l8 5M5 5l8 5M3 11l8-6M6 12l7-6" stroke="#403070" stroke-width=".8"/><circle cx="8" cy="8" r="1.700" fill="#c01818"/></symbol>
        <symbol id="n-grid" viewBox="0 0 16 16"><path d="M3.500 2l9 3v10l-9-3zM6.500 3v10M9.500 4v10M3 5.500l9 3M3 9l9 3" fill="none" stroke="#333"/><circle cx="7" cy="9" r="1.600" fill="#c01818"/></symbol>
        <symbol id="w-fit" viewBox="0 0 16 16"><path d="M1 1h14v13H1z" fill="#e6eeff"/><path d="M1 1h14v3H1z" fill="#2848c8"/><path d="M1.500 5v9h13V5" fill="none" stroke="#3050c0" stroke-dasharray="2 1"/><circle cx="8" cy="9" r="3.300" fill="#fff" stroke="#666"/><path d="M10 11l4 4" stroke="#666" stroke-width="1.500"/><path d="M0 13h3v3H0z" fill="#c03838"/></symbol>
        <symbol id="w-pan" viewBox="0 0 16 16"><path d="M.5 1.500h15v11H.5z" fill="#dde6fb" stroke="#7888b8"/><path d="M8 8l2-2 4 1 1 5-3 3-4-3z" fill="#f4d4a0" stroke="#98703c" stroke-width=".6"/></symbol>
        <symbol id="w-rotate" viewBox="0 0 16 16"><path d="M3 11a6 6 0 0 1 8-8M13 5a6 6 0 0 1-8 8" fill="none" stroke="#34549c" stroke-width="1.600"/><path d="M10 0l4 3-4 3zM6 16l-4-3 4-3z" fill="#34549c"/></symbol>
        <symbol id="w-persp" viewBox="0 0 16 16"><path d="M1 9l5-2 4 2v4l-5 2-4-2z" fill="#6888e0" stroke="#2c4c98" stroke-width=".7"/><path d="M6 7l7-4-3 7z" fill="#b0c4f4" stroke="#2c4c98" stroke-width=".7"/><circle cx="14.500" cy="1.500" r="1.200" fill="#c03838"/></symbol>
        <symbol id="w-list" viewBox="0 0 16 16"><path d="M1.500 1.500h8v9h-8z" fill="#f6f6f6" stroke="#999"/><path d="M3 4h2M6 4h2M3 7h2M6 7h2" stroke="#888"/><path d="M6 11l4-4v4h6l-4 4H6z" fill="#ddd" stroke="#999"/></symbol>
        <symbol id="w-layout" viewBox="0 0 16 16"><path d="M1 1h14v14H1z" fill="#e8eeff" stroke="#2848a8"/><path d="M1 1h14v3H1z" fill="#2c54c8"/><path d="M4 6h3v3H4zM9 6h3v3H9zM4 11h3v3H4zM9 11h3v3H9z" fill="#e05040"/></symbol>
        <symbol id="w-sect" viewBox="0 0 16 16"><path d="M1 9l6-7 3 0v7l5 2-7 3q-6 0-7-5z" fill="#909498" stroke="#333"/><path d="M4 9l4-4v5l6 1" fill="none" stroke="#eee"/></symbol>
        <symbol id="w-show" viewBox="0 0 16 16"><path d="M0 2l5 3-5 3z" fill="#20a040"/><path d="M0 9h5v5H0z" fill="#c02828"/><path d="M6 8l5-5 5 5-5 5z" fill="#c8d0f0" stroke="#555"/><path d="M8 8l3-3v6z" fill="#6878c8"/></symbol>

        <symbol id="r-gear" viewBox="0 0 24 24"><circle cx="12" cy="12" r="6" fill="none" stroke="#333" stroke-width="1.800"/><path d="M12 4v2M12 18v2M4 12h2M18 12h2M6.500 6.500l1 1M16.500 16.500l1 1M17.500 6.500l-1 1M7.500 16.500l-1 1" stroke="#333" stroke-width="2.500"/></symbol>
        <symbol id="r-asm" viewBox="0 0 24 24"><path d="M2 3l3-2 4 1v4l3 1v5l-3 2-7-1z" fill="#f8c830" stroke="#a87808"/><path d="M2 7l4 1v5M6 8l3-2M9 9l3-2" fill="none" stroke="#a87808"/><path d="M13 18l3-3 6 1v5l-3 2-6-1z" fill="#fcd850" stroke="#a87808"/><path d="M5.500 14v10M5 19h6" stroke="#1c1c90" stroke-width="1.500"/><path d="M15 12h9" stroke="#222" stroke-width="1.500"/></symbol>
        <symbol id="r-con" viewBox="0 0 24 24"><path d="M4 1l8 5-8 5zM20 1l-8 5 8 5z" fill="#2414a8"/><path d="M1.500 14.500h8v8h-8z" fill="#ffee30" stroke="#444"/><path d="M14 13v10h9z" fill="#c81010" stroke="#600"/><path d="M12 0v24" stroke="#333" stroke-dasharray="4 2"/></symbol>
        <symbol id="r-part" viewBox="0 0 24 24"><path d="M2 3v7q4 3 9 0V3" fill="#d878c0" stroke="#801c68"/><ellipse cx="6.500" cy="3" rx="4.500" ry="1.800" fill="#f0b8e0" stroke="#801c68"/><path d="M14 9h9" stroke="#222"/><path d="M6.500 13v10M6 18h5" stroke="#1c1c90" stroke-width="1.500"/><circle cx="17" cy="18" r="4.500" fill="none" stroke="#902880" stroke-width="1.500"/><circle cx="17" cy="18" r="1.700" fill="none" stroke="#902880"/></symbol>
        <symbol id="r-books" viewBox="0 0 24 24"><path d="M1 5l4-4h5L6 5v16H1z" fill="#f4a840" stroke="#a45c10" stroke-width=".7"/><path d="M6 6l4-4h5l-4 4v17H6z" fill="#48c848" stroke="#187818" stroke-width=".7"/><path d="M12 6l4-4h8l-4 4v16h-8z" fill="#68b8f4" stroke="#1c5ca4" stroke-width=".7"/><path d="M20 6l4-4v15l-4 5z" fill="#2474cc"/><path d="M6 8v12M12 8v13" stroke="#fff"/><path d="M13 10h6M13 18h6" stroke="#fff"/></symbol>
        <symbol id="r-info" viewBox="0 0 24 24"><path d="M8 6q8 0 9 10M8 1q14 0 15 14" fill="none" stroke="#5878b8" stroke-width="2.500"/><circle cx="8" cy="16" r="7.500" fill="#2478d8" stroke="#184c98"/><path d="M6 14h3v6h2M5.500 20h6M8 11h1" fill="none" stroke="#fff" stroke-width="1.800"/></symbol>
        <symbol id="r-web" viewBox="0 0 24 24"><path d="M3.500 1.500h12l5 5v16h-17z" fill="#f6faff" stroke="#3060b0"/><path d="M15.500 1.500v5h5" fill="#cfe0f8" stroke="#3060b0"/><circle cx="12" cy="14" r="5.500" fill="#38a048" stroke="#1c6c9c"/><path d="M12 9l3 8-5 1q-2-5 2-9z" fill="#a8dcf4"/></symbol>
        <symbol id="r-clock" viewBox="0 0 24 24"><circle cx="12" cy="12" r="10.500" fill="#e4f0fc" stroke="#7c848c" stroke-width="2"/><path d="M12 4v8h7" fill="none" stroke="#222" stroke-width="2"/><circle cx="12" cy="12" r="8" fill="none" stroke="#445" stroke-dasharray="1 3.190"/></symbol>
        <symbol id="r-wand" viewBox="0 0 24 24"><path d="M11 8l3-1 8 13-3 2z" fill="#222"/><path d="M19 20l2-1 1 2-2 1z" fill="#eee"/><path d="M11 1l1 4 4 0-3 3 1 3-3-2-3 2 1-4-3-2 4 0z" fill="#fff"/></symbol>
        <symbol id="r-color" viewBox="0 0 24 24"><path d="M2 1h8v22H2z" fill="url(#g-rainbow)"/><use href="#r-wand"/></symbol>
        <symbol id="r-mold" viewBox="0 0 24 24"><path d="M3 2h6v14l-2 2H3zM11 5h12v2h-5l4 1-5 4h-6z" fill="#6ca4e8" stroke="#1c4c98" stroke-width=".7"/><path d="M3 5h6M3 8h6M3 11h6M3 14h6" stroke="#1c4c98"/><path d="M2 18l3 1 4-1M2 21l7-1" stroke="#e0c020" stroke-width="1.500"/><use href="#r-wand"/></symbol>
        <symbol id="r-cam" viewBox="0 0 24 24"><path d="M10 3l5-2 5 1 2 4-4-2-4 3-3 5-3 3" fill="none" stroke="#444" stroke-width="1.600"/><path d="M3 12q2 5 7 4l8 4" fill="none" stroke="#667" stroke-width="3"/><circle cx="5" cy="20" r="3" fill="#f89c20"/><path d="M12 21h7" stroke="#556" stroke-width="3"/></symbol>

        <symbol id="t-plus" viewBox="0 0 19 20"><path d="M9.500 0v20M14 10.500h5" stroke="#999" stroke-dasharray="1 1"/><path d="M5.500 6.500h8v8h-8z" fill="#fff" stroke="#ccc"/><path d="M7 10.500h5M9.500 8v5" stroke="#111"/></symbol>
        <symbol id="t-plus-top" viewBox="0 0 19 20"><path d="M9.500 14v6M14 10.500h5" stroke="#999" stroke-dasharray="1 1"/><path d="M5.500 6.500h8v8h-8z" fill="#fff" stroke="#ccc"/><path d="M7 10.500h5M9.500 8v5" stroke="#111"/></symbol>
        <symbol id="t-minus" viewBox="0 0 19 20"><path d="M9.500 0v6M14 10.500h5" stroke="#999" stroke-dasharray="1 1"/><path d="M5.500 6.500h8v8h-8z" fill="#fff" stroke="#ccc"/><path d="M7 10.500h5" stroke="#111"/></symbol>
        <symbol id="t-child" viewBox="0 0 40 20"><path d="M28.500 0v20M29 10.500h9" stroke="#999" stroke-dasharray="1 1"/></symbol>
        <symbol id="t-last" viewBox="0 0 40 20"><path d="M28.500 0v11M29 10.500h9" stroke="#999" stroke-dasharray="1 1"/></symbol>
        <symbol id="views" viewBox="0 0 16 16"><path d="M1 4l7-3 6 3v7l-6 3-7-3zM1 4l7 3 6-3M8 1v13M1 11l7-4 6 4" fill="#e4f8ec" stroke="#128848"/><path d="M9 15l6-4" stroke="#e03818" stroke-width="1.500"/></symbol>
        <symbol id="camera" viewBox="0 0 16 16"><path d="M1 6l9-4 4 1v10l-12 2z" fill="#f4e4ec" stroke="#a81c38" stroke-width="1.300"/><circle cx="8" cy="8" r="3.500" fill="#d8c8f0" stroke="#382888" stroke-width="1.300"/><path d="M8 8h0M13 8v5" stroke="#222" stroke-width="2" stroke-linecap="round"/></symbol>
        <symbol id="folder" viewBox="0 0 16 16"><path d="M1 5l1-1h4l1 1h6v9H1z" fill="#f0b820" stroke="#84580c"/><path d="M1 14l3-7h12l-3 7z" fill="#ffe078" stroke="#84580c"/></symbol>
        <symbol id="folder-eq" viewBox="0 0 16 16"><use href="#folder"/><path d="M9 1h6M9 3h6" stroke="#2828a0"/></symbol>
        <symbol id="csys" viewBox="0 0 16 16"><path d="M2 2v7l8 5V6zM2 9l12-4M2 2l8 12" fill="none" stroke="#444" stroke-width=".9"/><path d="M12 3l4 1-3 3z" fill="#109830"/><path d="M8 13l5 3-4 0z" fill="#d02020"/><path d="M0 3l2-3 2 3z" fill="#2030c0"/></symbol>
        <symbol id="sk" viewBox="0 0 16 16"><path d="M1.500 1.500h5v5h-5zM1.500 9.500h3v5h-3zM7.500 10v4.500h7V8" fill="none" stroke="#222" stroke-width="1.200"/><path d="M7 9l6-7 2 2-6 6z" fill="#f4b428" stroke="#a05010" stroke-width=".7"/></symbol>
        <symbol id="ext" viewBox="0 0 16 16"><path d="M1 4l4-2 9 1 1 1v9l-5 1-5-1-4 1z" fill="#f89c30" stroke="#b04c08"/><path d="M5 3v10M8 5v9M11 5v9" stroke="#fff0c0" stroke-width="1.200"/></symbol>
        <symbol id="body" viewBox="0 0 16 16"><path d="M3 10l7-2 5 3v2l-6 3-6-3z" fill="#6088e8" stroke="#2038a0"/><path d="M7 3h5v6H7z" fill="#d8e4ff" stroke="#2038a0"/><circle cx="5" cy="5" r="4" fill="#f4c0c0" stroke="#c01818" stroke-width="1.600"/><path d="M2 3l6 5" stroke="#c01818" stroke-width="1.500"/></symbol>
        <symbol id="part" viewBox="0 0 16 16"><path d="M2 4l4-3 3 2v5l5 2v3l-6 2-6-4z" fill="#3c78e8" stroke="#0c2c98"/><path d="M2 4l4-3 3 2-3 2zM6 10l3-2 5 2-3 2z" fill="#d4e4ff"/></symbol>
    </svg>

    <div class="app">
        <header class="titlebar">
            <div class="quick">
                <span class="logo">NX</span>
                <i class="sep"></i>
                <button class="tool" title="保存"><svg class="icon"><use href="#save"/></svg></button>
                <i class="sep"></i>
                <button class="tool" title="撤消"><svg class="icon"><use href="#undo"/></svg></button>
                <button class="drop"><svg class="caret"><use href="#caret"/></svg></button>
                <button class="tool" title="重做"><svg class="icon"><use href="#redo"/></svg></button>
                <i class="sep"></i>
                <button class="tool" title="剪切"><svg class="icon"><use href="#cut"/></svg></button>
                <button class="tool" title="复制"><svg class="icon"><use href="#copy"/></svg></button>
                <button class="tool" title="粘贴"><svg class="icon"><use href="#paste"/></svg></button>
                <i class="sep"></i>
                <button class="tool" title="重复命令"><svg class="icon"><use href="#command"/></svg></button>
                <button class="drop"><svg class="caret"><use href="#caret"/></svg></button>
                <i class="sep"></i>
                <button class="tool" title="触控模式"><svg class="icon"><use href="#hand"/></svg></button>
                <i class="sep"></i>
                <button class="labelled"><svg class="icon"><use href="#switch"/></svg>切换窗口</button>
                <button class="labelled"><svg class="icon"><use href="#window"/></svg>窗口<svg class="caret"><use href="#caret"/></svg></button>
                <button class="drop"><svg class="caret-tall"><use href="#caret-bar"/></svg></button>
            </div>
            <div class="title">NX 12.0.0.27 - 建模</div>
            <div class="window-controls">
                <span class="brand">SIEMENS</span>
                <button title="最小化"><svg viewBox="0 0 14 14"><path d="M3 11.500h8" stroke="#444" stroke-width="2"/></svg></button>
                <button title="还原"><svg viewBox="0 0 14 14"><path d="M4 5V2h9v6h-3M1 5.500h9v6H1z" fill="none" stroke="#444" stroke-width="1.500"/></svg></button>
                <button title="关闭"><svg viewBox="0 0 14 14"><path d="M2 2l10 10M12 2L2 12" stroke="#444" stroke-width="2"/></svg></button>
            </div>
            <div class="overhang"></div>
        </header>

        <nav class="tabs">
            <button class="tab-file">文件(F)</button>
            <button class="tab active">主页</button>
            <button class="tab">装配</button>
            <button class="tab">曲线</button>
            <button class="tab">曲面</button>
            <button class="tab">逆向工程</button>
            <button class="tab">分析</button>
            <button class="tab">视图</button>
            <button class="tab">渲染</button>
            <button class="tab">工具</button>
            <button class="tab">PMI</button>
            <button class="tab">应用模块</button>
            <button class="tab">内部</button>
            <div class="tabs-right">
                <label class="search"><input type="text" placeholder="查找命令" aria-label="查找命令"><svg class="icon"><use href="#search"/></svg></label>
                <button class="tool" title="全屏"><svg class="icon"><use href="#fullscreen"/></svg></button>
                <button class="tool" title="最小化功能区"><svg class="icon"><use href="#collapse"/></svg></button>
                <button class="tool" title="帮助"><span class="help">?</span></button>
            </div>
        </nav>

        <div class="ribbon">
            <section class="group group-sketch">
                <div class="group-body">
                    <button class="big"><svg class="icon-lg"><use href="#sketch"/></svg>草图</button>
                    <div class="gallery">
                        <button title="轮廓"><svg class="icon-md"><use href="#s-profile"/></svg></button>
                        <button title="矩形"><svg class="icon-md"><use href="#s-rect"/></svg></button>
                        <button title="直线"><svg class="icon-md"><use href="#s-line"/></svg></button>
                        <button title="圆弧"><svg class="icon-md"><use href="#s-arc"/></svg></button>
                        <button title="圆"><svg class="icon-md"><use href="#s-circle"/></svg></button>
                        <button title="点"><svg class="icon-md"><use href="#s-plus"/></svg></button>
                    </div>
                    <div class="gallery-scroll">
                        <button><svg class="caret"><use href="#caret-up"/></svg></button>
                        <button><svg class="caret"><use href="#caret"/></svg></button>
                        <button><svg class="caret-tall"><use href="#caret-bar"/></svg></button>
                    </div>
                </div>
                <div class="group-label"><span>直接草图</span><svg class="caret"><use href="#caret"/></svg></div>
            </section>

            <section class="group group-feature">
                <div class="group-body">
                    <button class="big"><svg class="icon-lg"><use href="#plane"/></svg>基准平面<svg class="caret"><use href="#caret"/></svg></button>
                    <button class="big narrow"><svg class="icon-lg"><use href="#extrude"/></svg>拉伸<svg class="caret"><use href="#caret"/></svg></button>
                    <button class="big narrow"><svg class="icon-lg"><use href="#hole"/></svg>孔</button>
                    <div class="stack stack-apart">
                        <button><svg class="icon"><use href="#pattern"/></svg>阵列特征</button>
                        <button><svg class="icon"><use href="#unite"/></svg>合并<svg class="caret"><use href="#caret"/></svg></button>
                        <button><svg class="icon"><use href="#shell"/></svg>抽壳</button>
                    </div>
                    <button class="big"><svg class="icon-lg"><use href="#blend"/></svg>边倒圆<svg class="caret"><use href="#caret"/></svg></button>
                    <div class="stack">
                        <button><svg class="icon"><use href="#chamfer"/></svg>倒斜角</button>
                        <button><svg class="icon"><use href="#trim"/></svg>修剪体</button>
                        <button><svg class="icon"><use href="#draft"/></svg>拔模</button>
                    </div>
                    <button class="big more"><span><svg class="icon"><use href="#more-blue"/></svg></span>更多<svg class="caret"><use href="#caret"/></svg></button>
                </div>
                <div class="group-label"><span>特征</span><svg class="caret"><use href="#caret"/></svg></div>
            </section>

            <section class="group group-sync">
                <div class="group-body">
                    <button class="big"><svg class="icon-lg"><use href="#move-face"/></svg>移动面</button>
                    <div class="stack">
                        <button><svg class="icon"><use href="#face-offset"/></svg>偏置区域</button>
                        <button><svg class="icon"><use href="#face-replace"/></svg>替换面</button>
                        <button><svg class="icon"><use href="#face-delete"/></svg>删除面</button>
                    </div>
                    <button class="big more"><span><svg class="icon"><use href="#more-cycle"/></svg></span>更多<svg class="caret"><use href="#caret"/></svg></button>
                </div>
                <div class="group-label"><span>同步建模</span><svg class="caret"><use href="#caret"/></svg></div>
            </section>

            <section class="group group-standard">
                <div class="group-body mini">
                    <div class="mini-row">
                        <button><svg class="icon"><use href="#g-attr"/></svg></button>
                        <button><svg class="icon"><use href="#g-layers"/></svg></button>
                        <button><svg class="icon"><use href="#g-layers2"/></svg></button>
                        <i class="mini-sep"></i>
                        <button><svg class="icon"><use href="#g-tag"/></svg></button>
                    </div>
                    <div class="mini-row">
                        <button><svg class="icon"><use href="#g-part"/></svg></button>
                        <button><svg class="icon"><use href="#g-part2"/></svg></button>
                        <button><svg class="icon"><use href="#g-part3"/></svg></button>
                        <i class="mini-sep"></i>
                        <button><svg class="icon"><use href="#g-rename"/></svg></button>
                    </div>
                </div>
                <div class="group-label"><span>标准化工具 - G...</span><svg class="caret"><use href="#caret"/></svg></div>
            </section>

            <section class="group group-gear">
                <div class="group-body mini">
                    <div class="mini-row">
                        <button><svg class="icon"><use href="#gear-cyl"/></svg></button>
                        <button><svg class="icon"><use href="#gear-cone"/></svg></button>
                    </div>
                    <div class="mini-row">
                        <button><svg class="icon"><use href="#gear-show"/></svg></button>
                    </div>
                </div>
                <div class="group-label"><span>齿轮...</span><svg class="caret"><use href="#caret"/></svg></div>
            </section>

            <section class="group group-spring">
                <div class="group-body mini">
                    <div class="mini-row">
                        <button><svg class="icon"><use href="#spring"/></svg></button>
                        <button><svg class="icon"><use href="#spring2"/></svg></button>
                    </div>
                    <div class="mini-row">
                        <button><svg class="icon"><use href="#reel"/></svg></button>
                        <i class="mini-sep"></i>
                        <button><svg class="icon"><use href="#scissors"/></svg></button>
                    </div>
                </div>
                <div class="group-label"><span>弹簧...</span><svg class="caret"><use href="#caret"/></svg></div>
            </section>

            <section class="group group-gear">
                <div class="group-body mini">
                    <div class="mini-row">
                        <button><svg class="icon"><use href="#m-check"/></svg></button>
                        <button><svg class="icon"><use href="#m-copy"/></svg></button>
                    </div>
                    <div class="mini-row">
                        <button><svg class="icon"><use href="#m-grid"/></svg></button>
                        <button><svg class="icon"><use href="#m-axis"/></svg></button>
                    </div>
                </div>
                <div class="group-label"><span>加工...</span><svg class="caret"><use href="#caret"/></svg></div>
            </section>

            <section class="group group-model">
                <div class="group-body mini">
                    <div class="mini-row">
                        <button><svg class="icon"><use href="#b-tri"/></svg></button>
                        <button><svg class="icon"><use href="#b-table"/></svg></button>
                        <button><svg class="icon"><use href="#b-folder-plus"/></svg></button>
                        <button><svg class="icon"><use href="#b-folder-find"/></svg></button>
                    </div>
                    <div class="mini-row">
                        <button><svg class="icon"><use href="#b-note"/></svg></button>
                        <button><svg class="icon"><use href="#b-brush"/></svg></button>
                        <i class="mini-sep"></i>
                        <button><svg class="icon icon-text" viewBox="0 0 16 16"><path d="M2 1h4l1 5-3 2-3-3zM9 1h4l2 3-2 3-4-1z" fill="#68788c" stroke="#333" stroke-width=".7"/><text x="0" y="15" fill="#333">10<tspan fill="#a02020">H7</tspan></text></svg></button>
                    </div>
                </div>
                <div class="group-label"><span>建模工具 - G...</span><svg class="caret"><use href="#caret"/></svg></div>
            </section>

            <section class="group group-tiny">
                <div class="group-body mini">
                    <div class="mini-row"><button><svg class="icon"><use href="#boxes"/></svg></button></div>
                    <div class="mini-row"><button><svg class="icon"><use href="#boxes"/></svg></button></div>
                </div>
                <div class="group-label"><span>P..</span><svg class="caret"><use href="#caret"/></svg></div>
            </section>

            <section class="group group-dim">
                <div class="group-body mini">
                    <div class="mini-row">
                        <button><svg class="icon"><use href="#d-sec"/></svg></button>
                        <i class="mini-sep"></i>
                        <button><svg class="icon"><use href="#d-x"/></svg></button>
                        <button><svg class="icon icon-text" viewBox="0 0 16 16"><text x="1" y="6" fill="#333">1.00</text><text x="1" y="13" fill="#b04040">±.05</text></svg></button>
                        <button><svg class="icon icon-text" viewBox="0 0 16 16"><text x="1" y="5" fill="#333">1.00</text><text x="1" y="11" class="tiny" fill="#b04040">+.05</text><text x="3" y="16" class="tiny" fill="#b04040">-.02</text></svg></button>
                        <button><svg class="icon icon-text" viewBox="0 0 16 16"><text x="1" y="5" fill="#333">1.00</text><text x="1" y="11" class="tiny" fill="#b04040">+.05</text><text x="3" y="16" class="tiny" fill="#888">-.00</text></svg></button>
                        <button><svg class="icon icon-text" viewBox="0 0 16 16"><text x="1" y="5" fill="#333">1.00</text><text x="1" y="11" class="tiny" fill="#888">+.00</text><text x="3" y="16" class="tiny" fill="#b04040">-.02</text></svg></button>
                        <button><svg class="icon"><use href="#d-xbox"/></svg></button>
                        <button><svg class="icon"><use href="#d-xpar"/></svg></button>
                        <button><svg class="icon icon-text" viewBox="0 0 16 16"><text x="0" y="11" fill="#4848b0">10H7</text></svg></button>
                        <button><svg class="icon icon-text" viewBox="0 0 16 16"><text x="0" y="5" fill="#4848b0">10H7</text><text x="2" y="13" class="tiny" fill="#4848b0">18.01</text><path d="M2 7.500H.500v8H2M14 7.500h1.500v8H14" fill="none" stroke="#4848b0"/></svg></button>
                        <button><svg class="icon icon-text" viewBox="0 0 16 16"><text x="0" y="5" fill="#4848b0">10H7</text><text x="2" y="13" class="tiny" fill="#4848b0">0.015</text><path d="M2 7.500H.500v8H2M14 7.500h1.500v8H14" fill="none" stroke="#4848b0"/></svg></button>
                        <button><svg class="icon icon-text" viewBox="0 0 16 16"><text x="4" y="5" fill="#4848b0">10</text><text x="2" y="13" class="tiny" fill="#4848b0">0.015</text><path d="M2 7.500H.500v8H2M14 7.500h1.500v8H14" fill="none" stroke="#4848b0"/></svg></button>
                    </div>
                    <div class="mini-row">
                        <button><svg class="icon icon-text" viewBox="0 0 16 16"><path d="M2 15L15 3M2 15l1-4M2 15l4-1" stroke="#c02828" fill="none"/><text x="1" y="9" fill="#c02828" transform="rotate(-40 5 8)">AØ</text></svg></button>
                        <button><svg class="icon icon-text" viewBox="0 0 16 16"><path d="M1 13l5-5h10M1 13V9M1 13h4" stroke="#c02828" fill="none"/><text x="4" y="6" fill="#c02828">A[Ø]</text></svg></button>
                        <i class="mini-sep"></i>
                        <button><svg class="icon"><use href="#d-dia1"/></svg></button>
                        <button><svg class="icon"><use href="#d-dia2"/></svg></button>
                        <button><svg class="icon"><use href="#back"/></svg></button>
                    </div>
                </div>
                <div class="group-label"><span>尺寸快速格式化工具 - GC工具箱</span><svg class="caret"><use href="#caret"/></svg></div>
            </section>

            <section class="group group-surface">
                <div class="group-body">
                    <button class="big"><svg class="icon-lg"><use href="#surface"/></svg>曲面<svg class="caret"><use href="#caret"/></svg></button>
                </div>
            </section>

            <section class="group group-assembly">
                <div class="group-body">
                    <button class="big" disabled><svg class="icon-lg"><use href="#asm-process"/></svg>处理装配</button>
                    <button class="big medium"><svg class="icon-lg"><use href="#asm-add"/></svg>添加<svg class="caret"><use href="#caret"/></svg></button>
                    <div class="stack">
                        <button><svg class="icon"><use href="#constrain"/></svg>装配约束</button>
                        <button><svg class="icon"><use href="#asm-move"/></svg>移动组件</button>
                        <button><svg class="icon"><use href="#asm-pattern"/></svg>阵列组件</button>
                    </div>
                </div>
                <div class="group-label"><span>装配</span><svg class="caret"><use href="#caret"/></svg></div>
            </section>
            <button class="bar-options"><svg class="caret"><use href="#caret"/></svg></button>
        </div>

        <div class="selection-bar">
            <button class="labelled menu"><svg class="icon"><use href="#menu"/></svg><span>菜单(<u>M</u>)</span><svg class="caret"><use href="#caret"/></svg></button>
            <i class="sep"></i>
            <div class="combo combo-filter">
                <select aria-label="选择过滤器"><option>无选择过滤器</option></select>
            </div>
            <div class="combo combo-scope">
                <select aria-label="选择范围"><option>整个装配</option></select>
            </div>
            <div class="tools tools-tight">
                <button><svg class="icon"><use href="#f-find"/></svg></button>
                <button><svg class="icon"><use href="#f-reset"/></svg></button>
                <button><svg class="icon"><use href="#f-box"/></svg></button>
                <button class="drop"><svg class="caret"><use href="#caret"/></svg></button>
                <button><svg class="icon"><use href="#f-up"/></svg></button>
                <button><svg class="icon"><use href="#f-up2"/></svg></button>
                <button><svg class="icon"><use href="#f-sel"/></svg></button>
                <button><svg class="icon"><use href="#f-rect"/></svg></button>
                <button class="drop"><svg class="caret"><use href="#caret"/></svg></button>
            </div>
            <div class="tools">
                <button><svg class="icon"><use href="#v-clip"/></svg></button>
                <button><svg class="icon"><use href="#v-box"/></svg></button>
                <button class="on"><svg class="icon"><use href="#n-point"/></svg></button>
                <button class="on"><svg class="icon"><use href="#n-end"/></svg></button>
                <button class="on"><svg class="icon"><use href="#n-mid"/></svg></button>
                <button><svg class="icon"><use href="#n-ctrl"/></svg></button>
                <button class="on"><svg class="icon"><use href="#n-poly"/></svg></button>
                <button class="on"><svg class="icon"><use href="#n-spline"/></svg></button>
                <button><svg class="icon"><use href="#n-int"/></svg></button>
                <button><svg class="icon"><use href="#n-quad"/></svg></button>
                <button class="on"><svg class="icon"><use href="#n-exist"/></svg></button>
                <button class="on"><svg class="icon"><use href="#n-curve"/></svg></button>
                <button><svg class="icon"><use href="#n-face"/></svg></button>
                <button><svg class="icon"><use href="#n-mesh"/></svg></button>
                <button><svg class="icon"><use href="#n-grid"/></svg></button>
            </div>
            <i class="sep"></i>
            <div class="tools">
                <button><svg class="icon"><use href="#w-fit"/></svg></button>
                <button><svg class="icon"><use href="#w-pan"/></svg></button>
                <button><svg class="icon"><use href="#w-rotate"/></svg></button>
                <button><svg class="icon"><use href="#w-persp"/></svg></button>
                <button><svg class="icon"><use href="#w-list"/></svg></button>
                <button><svg class="icon"><use href="#w-layout"/></svg></button>
                <button class="drop"><svg class="caret"><use href="#caret"/></svg></button>
                <button><svg class="icon"><use href="#w-sect"/></svg></button>
                <button class="drop"><svg class="caret"><use href="#caret"/></svg></button>
                <button><svg class="icon"><use href="#block"/></svg></button>
                <button class="drop"><svg class="caret"><use href="#caret"/></svg></button>
                <button><svg class="icon"><use href="#w-show"/></svg></button>
                <button class="drop"><svg class="caret"><use href="#caret"/></svg></button>
            </div>
            <i class="sep"></i>
            <button class="bar-options"><svg class="caret"><use href="#caret"/></svg></button>
        </div>

        <main class="workspace">
            <nav class="rail">
                <button class="rail-gear" title="资源条选项"><svg class="icon-sm"><use href="#r-gear"/></svg></button>
                <button title="装配导航器"><svg class="icon-md"><use href="#r-asm"/></svg></button>
                <button title="约束导航器"><svg class="icon-md"><use href="#r-con"/></svg></button>
                <button class="active" title="部件导航器"><svg class="icon-md"><use href="#r-part"/></svg></button>
                <button title="重用库"><svg class="icon-md"><use href="#r-books"/></svg></button>
                <button class="tall" title="HD3D 工具"><svg class="icon-md"><use href="#r-info"/></svg></button>
                <button class="tall" title="Web 浏览器"><svg class="icon-md"><use href="#r-web"/></svg></button>
                <button class="tall" title="历史记录"><svg class="icon-md"><use href="#r-clock"/></svg></button>
                <button class="short" title="系统材料"><svg class="icon-md"><use href="#r-color"/></svg></button>
                <button class="short" title="Process Studio"><svg class="icon-md"><use href="#r-mold"/></svg></button>
                <button class="short" title="加工向导"><svg class="icon-md"><use href="#r-cam"/></svg></button>
            </nav>

            <aside class="navigator">
                <div class="nav-head"><span>部件导航器</span><button class="maximize" title="最大化"></button></div>
                <div class="tree">
                    <div class="tree-body">
                        <table>
                            <colgroup><col class="col-name"><col class="col-state"><col></colgroup>
                            <thead>
                                <tr><th>名称<span class="sort"></span></th><th>最新</th><th class="clip">附</th></tr>
                            </thead>
                            <tbody>
                                <tr><td><div class="node"><svg class="twig"><use href="#t-plus-top"/></svg><svg class="icon"><use href="#views"/></svg><span>模型视图</span></div></td><td></td><td></td></tr>
                                <tr><td><div class="node"><svg class="twig"><use href="#t-plus"/></svg><svg class="icon"><use href="#check"/></svg><svg class="icon"><use href="#camera"/></svg><span>摄像机</span></div></td><td></td><td></td></tr>
                                <tr><td><div class="node"><svg class="twig"><use href="#t-plus"/></svg><svg class="icon"><use href="#folder-eq"/></svg><span>用户表达式</span></div></td><td></td><td></td></tr>
                                <tr><td><div class="node"><svg class="twig"><use href="#t-minus"/></svg><svg class="icon"><use href="#folder"/></svg><span>模型历史记录</span></div></td><td></td><td></td></tr>
                                <tr><td><label class="node"><svg class="twig-child"><use href="#t-child"/></svg><input type="checkbox" checked><svg class="icon"><use href="#csys"/></svg><span>基准坐标系 (0)</span></label></td><td><svg class="icon"><use href="#check"/></svg></td><td></td></tr>
                                <tr><td><label class="node"><svg class="twig-child"><use href="#t-child"/></svg><input type="checkbox" checked><svg class="icon"><use href="#block"/></svg><span>块 (1)</span></label></td><td><svg class="icon"><use href="#check"/></svg></td><td></td></tr>
                                <tr><td><label class="node muted"><svg class="twig-child"><use href="#t-child"/></svg><input type="checkbox" checked><svg class="icon"><use href="#sk"/></svg><span>草图 (2) "SKETCH_0...</span></label></td><td><svg class="icon"><use href="#check"/></svg></td><td></td></tr>
                                <tr><td><label class="node"><svg class="twig-child"><use href="#t-child"/></svg><input type="checkbox" checked><svg class="icon"><use href="#ext"/></svg><span>拉伸 (3)</span></label></td><td><svg class="icon"><use href="#check"/></svg></td><td></td></tr>
                                <tr><td><label class="node current"><svg class="twig-child"><use href="#t-last"/></svg><input type="checkbox" checked><svg class="icon"><use href="#body"/></svg><span>体 (4)</span></label></td><td><svg class="icon"><use href="#check"/></svg></td><td></td></tr>
                            </tbody>
                        </table>
                    </div>
                    <div class="hscroll">
                        <button><svg viewBox="0 0 16 16"><path d="M10 4L6 8l4 4" fill="none" stroke="#444" stroke-width="2"/></svg></button>
                        <div class="track"><div class="thumb"></div></div>
                        <button><svg viewBox="0 0 16 16"><path d="M6 4l4 4-4 4" fill="none" stroke="#444" stroke-width="2"/></svg></button>
                    </div>
                </div>
                <div class="splitter"></div>
                <button class="fold">相关性<svg viewBox="0 0 12 10"><path d="M1 1h2.500L6 6l2.500-5H11L6.500 9h-1z" fill="#14647e"/></svg></button>
                <button class="fold">细节<svg viewBox="0 0 12 10"><path d="M1 1h2.500L6 6l2.500-5H11L6.500 9h-1z" fill="#14647e"/></svg></button>
                <button class="fold">预览<svg viewBox="0 0 12 10"><path d="M1 1h2.500L6 6l2.500-5H11L6.500 9h-1z" fill="#14647e"/></svg></button>
            </aside>

            <section class="stage">
                <div class="doc-tabs">
                    <div class="doc-tab">
                        <svg class="icon"><use href="#part"/></svg>
                        <span>_model1.prt</span>
                        <svg class="doc-mark" viewBox="0 0 12 12"><path d="M9 4V3L7 1H2v10h7V9M6 7h4M8 5l2 2-2 2" fill="none" stroke="#fff" stroke-width="1.500"/></svg>
                        <button title="关闭"><svg viewBox="0 0 10 10"><path d="M1 1l8 8M9 1L1 9" stroke="#fff" stroke-width="2.500"/></svg></button>
                    </div>
                </div>
                <div class="viewport">
                    <svg class="model" viewBox="363 200 1555 815">
                        <g stroke="#2a1c00" stroke-linejoin="round">
                            <path d="M809 533l397-162.500 426 301-397.500 163z" fill="#ffc901"/>
                            <path d="M809 533l425.500 301.500-2 71.500L806 605z" fill="#a96300"/>
                            <path d="M1234.500 834.500l397.500-163-2 71-397.500 163.500z" fill="#b97000"/>
                            <path d="M1022 683.500l397.500-162.500" fill="none"/>
                            <ellipse cx="1114.300" cy="527.300" rx="51.300" ry="28.200" fill="url(#g-hole)" transform="rotate(2 1114.300 527.300)"/>
                            <ellipse cx="1327.300" cy="678" rx="51.300" ry="28.200" fill="url(#g-hole)" transform="rotate(2 1327.300 678)"/>
                        </g>
                        <g fill="none" stroke-width="1.300">
                            <path d="M979.500 670l41.500 29M979.500 670L977 725l-34-24" stroke="#5a30c8"/>
                            <path d="M1021 699l52.500-21-1.500 56-42-30-53 21M1019 756l53-22 40-17" stroke="#d9c9a8"/>
                            <path d="M977 725l42 30M1019 757l4-110" stroke="#2018c0"/>
                        </g>
                        <path d="M1023 645l-3.500 13h7zM937 697l11 2-4 7z" fill="#0a0ac0"/>
                        <path d="M1122 713l-13 1 3 6z" fill="#d8d8d0" stroke="#888" stroke-width=".5"/>
                        <path d="M1018 755l-33-24 15 5zM1018 755l-20-16-8-4 8 9z" fill="#2c9c2c"/>
                        <path d="M1019 755l-2.500-33 4-20 2.500 20z" fill="#0c30a8"/>
                        <path d="M1020 755l28-14 14-3-12 7z" fill="#e89088"/>
                        <path d="M1018 751v11M1012 756h9" stroke="#0a0aff" stroke-width="1.800"/>
                        <g class="axis-text">
                            <text x="1019" y="643" fill="#2424d0">Z</text>
                            <text x="928" y="698" fill="#2c2cc0">Y</text>
                            <text x="1124" y="716" fill="#d6d0bc">X</text>
                            <text x="1001" y="708" fill="#3048e0">ZC</text>
                            <text x="986" y="728" fill="#3c8c28">YC</text>
                            <text x="1048" y="733" fill="#c43430">XC</text>
                        </g>
                    </svg>
                    <svg class="triad" viewBox="0 0 80 60">
                        <path d="M20 24l21-8 16 11v23l-22 7-15-12z" fill="#c9cacc" stroke="#a4a4a6"/>
                        <path d="M20 24l15 11 22-8M35 35v22M41 16l-2 21-19 8M39 37l18 13" fill="none" stroke="#a4a4a6"/>
                        <path d="M36 56L10 39" stroke="#2c7c2c" stroke-width="2"/><path d="M8 38l8 2-3 5z" fill="#208820"/>
                        <path d="M36 57l30-13" stroke="#c83c3c" stroke-width="2"/><path d="M69 43l-10 1 3 5z" fill="#d83030"/>
                        <path d="M36 55V30" stroke="#0c28a8" stroke-width="2.500"/><path d="M37 21l-3 12h6z" fill="#0c28a8"/>
                        <circle cx="35.500" cy="57" r="3.500" fill="#b8b8b8"/>
                        <g class="axis-text"><text x="33" y="20" fill="#3448e0">Z</text><text x="1" y="40" fill="#2c8c2c">Y</text><text x="71" y="46" fill="#d03c3c">X</text></g>
                    </svg>
                </div>
            </section>
        </main>

        <footer class="status">
            <span>选择对象并使用 MB3，或者双击某一对象</span>
            <div class="status-icons">
                <svg class="icon" viewBox="0 0 16 16"><path d="M0 0h16v16H0z" fill="#ccc"/><path d="M2 4h12M5 2v9M10 2v12M3 8h10" stroke="#999"/></svg>
                <svg class="icon"><use href="#fullscreen"/></svg>
            </div>
        </footer>

        <div class="meter">
            <svg viewBox="0 0 66 66"><circle cx="33" cy="33" r="30.500" fill="#fff" stroke="#f2f4f4" stroke-width="5"/><circle cx="33" cy="33" r="30.500" fill="none" stroke="#36d868" stroke-width="5" pathLength="100" stroke-dasharray="71 29" transform="rotate(-90 33 33)"/><circle cx="33" cy="33" r="28" fill="#f6fff8" stroke="#38c070"/></svg>
            <div class="meter-value">71<small>%</small></div>
            <div class="meter-speed"><b>↑</b> 0.1K/s</div>
        </div>
        <div class="ime">
            <svg class="ime-logo" viewBox="0 0 32 32"><path d="M1 5q0-2 2-2l22-3q3 0 3 2l4 22q0 3-2 4L9 32q-3 0-4-3z" fill="#ee5a28"/><path d="M24 9Q10 5 9 11q0 4 8 5 8 1 7 5-3 5-15 2" fill="none" stroke="#fff" stroke-width="4.500"/></svg>
            <button class="ime-lang">英</button>
            <button><svg viewBox="0 0 16 16"><circle cx="4" cy="5" r="2.200" fill="#0c6ad0"/><path d="M9 8h4v3q0 3-4 4 2-2 1-3H9z" fill="#0c6ad0"/></svg></button>
            <button><svg viewBox="0 0 16 16"><rect x="5" y="0" width="6" height="10" rx="3" fill="#0c6ad0"/><path d="M3 6q0 6 5 6t5-6M8 12v3M5 15.300h6" fill="none" stroke="#0c6ad0" stroke-width="1.500"/></svg></button>
            <button><svg viewBox="0 0 16 16"><rect x="1" y="2" width="14" height="12" rx="1.500" fill="#fff" stroke="#0c6ad0" stroke-width="1.600"/><path d="M3 5.500h10M3 8.500h10" stroke="#0c6ad0" stroke-width="1.800" stroke-dasharray="1.800 1"/><path d="M5 11.500h6" stroke="#0c6ad0" stroke-width="1.500"/></svg></button>
            <button><svg viewBox="0 0 16 16"><rect x="1" y="1" width="6.500" height="6.500" rx="1.500" fill="#0c6ad0"/><rect x="1" y="9" width="6.500" height="6.500" rx="1.500" fill="#0c6ad0"/><rect x="9" y="9" width="6.500" height="6.500" rx="1.500" fill="#0c6ad0"/><rect x="10" y="2" width="4.500" height="4.500" rx="1.500" fill="none" stroke="#0c6ad0" stroke-width="1.800"/></svg></button>
        </div>
        <div class="watermark">CSDN @山涧果子</div>
    </div>
</body>
</html>
```

FILE: styles.css
```css
* {
    box-sizing: border-box;
}
body {
    margin: 0;
    font-family: "Open Sans", "Noto Sans CJK SC", sans-serif;
    font-size: 11px;
    line-height: 16px;
    color: #1a1a1a;
    background: #fff;
}
button {
    display: flex;
    align-items: center;
    justify-content: center;
    margin: 0;
    padding: 0;
    border: 0;
    background: none;
    font: inherit;
    color: inherit;
    white-space: nowrap;
}
svg {
    display: block;
    flex: none;
}
.sprite {
    position: absolute;
    width: 0;
    height: 0;
}
.icon {
    width: 16px;
    height: 16px;
}
.icon-sm {
    width: 20px;
    height: 20px;
}
.icon-md {
    width: 24px;
    height: 24px;
}
.icon-lg {
    width: 32px;
    height: 32px;
}
.icon-text {
    overflow: visible;
    font-family: "Liberation Sans", sans-serif;
    font-size: 7px;
    font-weight: bold;
}
.icon-text .tiny {
    font-size: 5px;
}
.caret {
    width: 7px;
    height: 4px;
}
.caret-tall {
    width: 8px;
    height: 8px;
}
.app {
    display: flex;
    flex-direction: column;
    height: 100vh;
    overflow: hidden;
    position: relative;
}

/* 标题栏 */
.titlebar {
    display: flex;
    align-items: center;
    height: 23px;
    flex: none;
    padding-bottom: 3px;
}
.quick,
.window-controls {
    display: flex;
    align-items: center;
}
.quick {
    flex: 15 1 0;
    padding-left: 2px;
}
.logo {
    width: 38px;
    font-size: 22px;
    line-height: 20px;
    font-weight: bold;
    color: #7f95a6;
}
.sep {
    width: 1px;
    height: 18px;
    background: #d4d4d4;
}
.tool {
    width: 23px;
}
.quick .sep {
    margin: 0 3px 0 2px;
}
.quick .sep:first-of-type {
    margin: 0 6px 0 0;
}
.drop {
    width: 11px;
}
.labelled {
    gap: 4px;
    margin-left: 3px;
}
.labelled + .labelled {
    margin-left: 6px;
}
.labelled .caret {
    margin-left: 3px;
}
.title {
    font-size: 12px;
}
.window-controls {
    flex: 11 1 0;
    justify-content: flex-end;
    gap: 9px;
    padding-right: 6px;
}
.window-controls svg {
    width: 14px;
    height: 14px;
}
.brand {
    margin-right: 16px;
    font-size: 13px;
    font-weight: 800;
    color: #009490;
}
.overhang {
    position: absolute;
    top: -8px;
    left: 71%;
    width: 15%;
    height: 8px;
    border-radius: 4px;
    box-shadow: 0 0 5px rgba(0, 0, 0, 0.2);
}

/* 选项卡 */
.tabs {
    display: flex;
    height: 28px;
    flex: none;
    background: #dcdcdc;
    font-size: 13px;
}
.tab-file {
    width: 80px;
    margin-right: 2px;
    background: #52a0b6;
    color: #fff;
}
.tab {
    padding: 0 13px;
}
.tab.active {
    margin-top: 1px;
    border-top: 1px solid #aaa;
    background: #fff;
    color: #17627c;
}
.tabs-right {
    display: flex;
    align-items: center;
    gap: 4px;
    margin-left: auto;
    padding-right: 2px;
}
.help {
    width: 14px;
    height: 14px;
    border-radius: 50%;
    background: #3a62c8;
    font-size: 11px;
    line-height: 14px;
    font-weight: bold;
    color: #fff;
}
.search {
    display: flex;
    align-items: center;
    width: 125px;
    height: 20px;
    margin-right: 4px;
    border: 1px solid #999;
    background: #fff;
}
.search input {
    flex: 1;
    min-width: 0;
    padding: 0 1px;
    border: 0;
    outline: 0;
    font: inherit;
    font-size: 11px;
}
.search input::placeholder {
    color: #aaa;
}
.search .icon {
    margin-right: 1px;
}

/* 功能区 */
.ribbon {
    display: flex;
    height: 94px;
    flex: none;
    border-bottom: 1px solid #d4d4d4;
}
.group {
    display: flex;
    flex-direction: column;
    flex: none;
    background: linear-gradient(#d8d8d8, #d8d8d8) right 5px / 1px 84px no-repeat;
}
.group-sketch { width: 177px; padding-left: 3px; }
.group-feature { width: 368px; padding-left: 9px; }
.group-sync { width: 173px; padding-left: 4px; }
.group-standard { width: 104px; }
.group-gear { width: 52px; }
.group-spring { width: 58px; }
.group-model { width: 98px; }
.group-tiny { width: 29px; }
.group-dim { width: 288px; }
.group-surface { width: 43px; }
.group-assembly { width: 181px; padding-left: 9px; }
.group-body {
    display: flex;
    height: 75px;
    padding-top: 1px;
}
.group-label {
    display: flex;
    align-items: center;
    height: 18px;
    padding-right: 8px;
    color: #17627c;
}
.group-label span {
    flex: 1;
    min-width: 0;
    text-align: center;
    white-space: nowrap;
}
.group-label .caret {
    margin-left: 3px;
}
.big {
    flex-direction: column;
    justify-content: flex-start;
    width: 50px;
    height: 69px;
    padding-top: 4px;
}
.big .icon-lg {
    margin-bottom: 4px;
}
.big .caret {
    margin-top: 4px;
}
.big.narrow {
    width: 40px;
}
.big.medium {
    width: 44px;
}
.group-surface .big {
    width: 42px;
}
.big:disabled {
    color: #b4b4b4;
}
.more {
    width: 38px;
    margin-left: 10px;
    padding-top: 3px;
}
.more span {
    display: flex;
    align-items: center;
    justify-content: center;
    width: 38px;
    height: 35px;
    margin-bottom: 2px;
    border: 1px solid #ddd;
    border-radius: 3px;
}
.stack {
    display: flex;
    flex-direction: column;
    margin-left: 2px;
}
.stack-apart {
    margin-left: 8px;
}
.stack button {
    justify-content: flex-start;
    height: 22px;
    gap: 4px;
}
.stack .caret {
    margin-left: 4px;
}
.gallery {
    display: grid;
    grid-template-columns: repeat(3, 1fr);
    width: 99px;
    height: 66px;
    margin: 4px 0 0 3px;
    border: 1px solid #d8d8d8;
}
.gallery-scroll {
    display: flex;
    flex-direction: column;
    width: 17px;
    margin-top: 4px;
}
.gallery-scroll button {
    height: 22px;
}
.group-body.mini {
    flex-direction: column;
    padding: 6px 0 0 3px;
}
.mini-row {
    display: flex;
    height: 30px;
}
.mini-row button {
    width: 23px;
}
.mini-sep {
    width: 1px;
    height: 18px;
    margin: 6px 2px;
    background: #d8d8d8;
}
.bar-options {
    align-self: flex-end;
    width: 16px;
    height: 20px;
    margin-left: auto;
}

/* 选择条 */
.selection-bar {
    display: flex;
    align-items: center;
    height: 32px;
    flex: none;
    border-bottom: 1px solid #85909a;
}
.selection-bar .sep {
    height: 24px;
}
.menu {
    margin: 0 5px 0 9px;
}
.combo {
    position: relative;
    height: 20px;
}
.combo::after {
    content: "";
    position: absolute;
    right: 5px;
    top: 8px;
    border: 4px solid transparent;
    border-top-color: #111;
    border-bottom: 0;
    pointer-events: none;
}
.combo-filter {
    width: 133px;
    margin: 0 8px 0 11px;
}
.combo-scope {
    width: 140px;
    margin-right: 6px;
}
.combo select {
    width: 100%;
    height: 20px;
    padding: 0 2px;
    border: 1px solid #999;
    border-radius: 0;
    background: #fff;
    appearance: none;
    font: inherit;
    color: inherit;
}
.tools {
    display: flex;
    align-items: center;
}
.tools button {
    width: 23px;
    height: 22px;
    margin: 0 1px;
    border: 1px solid transparent;
}
.tools-tight {
    margin-right: 4px;
}
.tools-tight button {
    width: 22px;
}
.tools .drop {
    width: 11px;
    margin: 0;
    border: 0;
}
.tools .on {
    border-color: #b2d3dc;
    background: #cfe8ee;
}
.tools + .sep {
    margin: 0 7px;
}

/* 工作区 */
.workspace {
    display: flex;
    flex: 1;
    min-height: 0;
}
.rail {
    display: flex;
    flex-direction: column;
    width: 31px;
    flex: none;
    border-right: 1px solid #999;
    background: #dcdcdc;
}
.rail button {
    width: 31px;
    height: 42px;
    padding-left: 2px;
    flex: none;
}
.rail .rail-gear {
    width: 28px;
    height: 26px;
    margin-bottom: 17px;
    padding: 0;
}
.rail .active {
    width: 30px;
    height: 45px;
    margin: -2px -1px 0 1px;
    border: 1px solid #999;
    border-right: 0;
    background: #fff;
}
.rail .tall {
    height: 54px;
}
.rail .active + button {
    height: 40px;
    margin-bottom: 5px;
}
.rail .tall + .short {
    margin-top: -5px;
}
.navigator {
    display: flex;
    flex-direction: column;
    width: 332px;
    flex: none;
    padding: 0 9px 6px 6px;
    border-right: 1px solid #888;
}
.nav-head {
    display: flex;
    align-items: center;
    justify-content: space-between;
    height: 28px;
    padding: 2px 7px 0 4px;
    font-size: 12px;
}
.maximize {
    width: 12px;
    height: 11px;
    border: 1px solid #111;
    border-top-width: 2px;
}
.tree {
    display: flex;
    flex-direction: column;
    flex: 1;
    min-height: 0;
    padding: 1px;
    border: 1px solid #d0d0d0;
}
.tree-body {
    flex: 1;
    min-height: 0;
    overflow: hidden;
    background:
        linear-gradient(#e6e6e6, #e6e6e6) 199px 0 / 1px 100% no-repeat,
        linear-gradient(#e6e6e6, #e6e6e6) 299px 0 / 1px 100% no-repeat,
        linear-gradient(#fff 19px, #e9e9e9 19px 20px, #fafafa 20px 39px, #e9e9e9 39px) 0 21px / 100% 40px;
}
.tree table {
    width: 100%;
    table-layout: fixed;
    border-spacing: 0;
    font-size: 12px;
}
.col-name {
    width: 200px;
}
.col-state {
    width: 100px;
}
.tree th {
    height: 21px;
    padding: 1px 6px 0;
    border-right: 1px solid #d4d4d4;
    border-bottom: 1px solid #d4d4d4;
    background: #f0f0f0;
    font-weight: normal;
    text-align: left;
    white-space: nowrap;
}
.tree th.clip {
    padding-right: 0;
    border-right: 0;
    overflow: hidden;
}
.tree td {
    height: 20px;
    padding: 0;
}
.tree td + td {
    padding-left: 4px;
}
.sort {
    display: inline-block;
    margin: 0 0 2px 18px;
    border: 5px solid transparent;
    border-top: 0;
    border-bottom-color: #111;
}
.node {
    display: flex;
    align-items: center;
    height: 20px;
}
.node span {
    margin-left: 3px;
    white-space: nowrap;
}
.twig {
    width: 19px;
    height: 20px;
}
.twig-child {
    width: 40px;
    height: 20px;
}
.node input {
    width: 12px;
    height: 12px;
    margin: 0 2px 0 0;
    border: 1px solid #111;
    background: #fff;
    appearance: none;
}
.node input:checked::before {
    content: "";
    display: block;
    width: 10px;
    height: 10px;
    background: #16b830;
    clip-path: polygon(0 55%, 20% 45%, 40% 65%, 85% 5%, 100% 15%, 50% 100%, 35% 100%);
}
.muted {
    color: #a0a0a0;
}
.current {
    font-weight: bold;
}
.hscroll {
    display: flex;
    height: 16px;
    background: #f0f0f0;
}
.hscroll button {
    width: 17px;
}
.hscroll svg {
    width: 16px;
    height: 16px;
}
.track {
    flex: 1;
}
.thumb {
    width: 78%;
    height: 16px;
    background: #cdcdcd;
}
.splitter {
    height: 5px;
    flex: none;
    border: 1px solid #aaa;
    background: #dcdcdc;
}
.fold {
    justify-content: space-between;
    height: 24px;
    flex: none;
    padding: 2px 5px 0 7px;
    border-bottom: 2px solid #d0d0d0;
    font-size: 14px;
    color: #14647e;
}
.fold svg {
    width: 13px;
    height: 10px;
}

/* 图形窗口 */
.stage {
    display: flex;
    flex-direction: column;
    flex: 1;
    min-width: 0;
}
.doc-tabs {
    display: flex;
    height: 23px;
    flex: none;
    border-bottom: 2px solid #52a0b6;
}
.doc-tab {
    display: flex;
    align-items: center;
    gap: 6px;
    padding: 0 7px 0 6px;
    background: #52a0b6;
    color: #fff;
    font-size: 12px;
}
.doc-mark {
    width: 11px;
    height: 12px;
}
.doc-tab button svg {
    width: 9px;
    height: 9px;
}
.viewport {
    position: relative;
    flex: 1;
    min-height: 0;
    background: linear-gradient(#b4b5b6, #c9cacb 36%, #e4e5e6 74%, #e7e9ea 92%);
}
.model {
    width: 100%;
    height: 100%;
}
.triad {
    position: absolute;
    left: 30px;
    bottom: 65px;
    width: 80px;
    height: 60px;
}
.axis-text {
    font-size: 13px;
}
.triad .axis-text {
    font-size: 12px;
}

/* 状态栏 */
.status {
    display: flex;
    justify-content: space-between;
    height: 22px;
    flex: none;
    padding: 1px 54px 0 2px;
    border-top: 1px solid #a4a4a4;
    font-weight: bold;
}
.status-icons {
    display: flex;
    gap: 4px;
    padding-top: 2px;
}

/* 悬浮控件 */
.meter {
    position: absolute;
    right: 393px;
    bottom: 5px;
    width: 66px;
    height: 66px;
    border-radius: 50%;
    box-shadow: 0 0 8px rgba(0, 0, 0, 0.15);
}
.meter > svg {
    position: absolute;
    width: 66px;
    height: 66px;
}
.meter-value,
.meter-speed {
    position: relative;
    text-align: center;
}
.meter-value {
    padding-top: 13px;
    font-size: 23px;
    line-height: 24px;
    font-weight: 300;
}
.meter-value small {
    font-size: 12px;
    font-weight: normal;
}
.meter-speed {
    font-size: 9px;
    line-height: 16px;
}
.meter-speed b {
    color: #2c84e0;
}
.ime {
    position: absolute;
    right: 451px;
    bottom: 4px;
    display: flex;
    align-items: center;
    width: 154px;
    height: 28px;
    background: linear-gradient(#fff, #fff) right top / 140px 26px no-repeat;
}
.ime::after {
    content: "";
    position: absolute;
    left: 28px;
    right: 0;
    top: 1px;
    bottom: 1px;
    border: 1px solid #b8cbe0;
    border-left: 0;
    pointer-events: none;
}
.ime-logo {
    width: 32px;
    height: 32px;
}
.ime button {
    width: 24px;
}
.ime button svg {
    width: 15px;
    height: 15px;
}
.ime .ime-lang {
    width: 26px;
    font-size: 14px;
    font-weight: bold;
    color: #0c6ad0;
}
.watermark {
    position: absolute;
    right: 14px;
    bottom: 5px;
    font-size: 20px;
    line-height: 26px;
    color: rgba(130, 130, 130, 0.8);
    text-shadow: 1px 1px 1px #fff;
}
```
